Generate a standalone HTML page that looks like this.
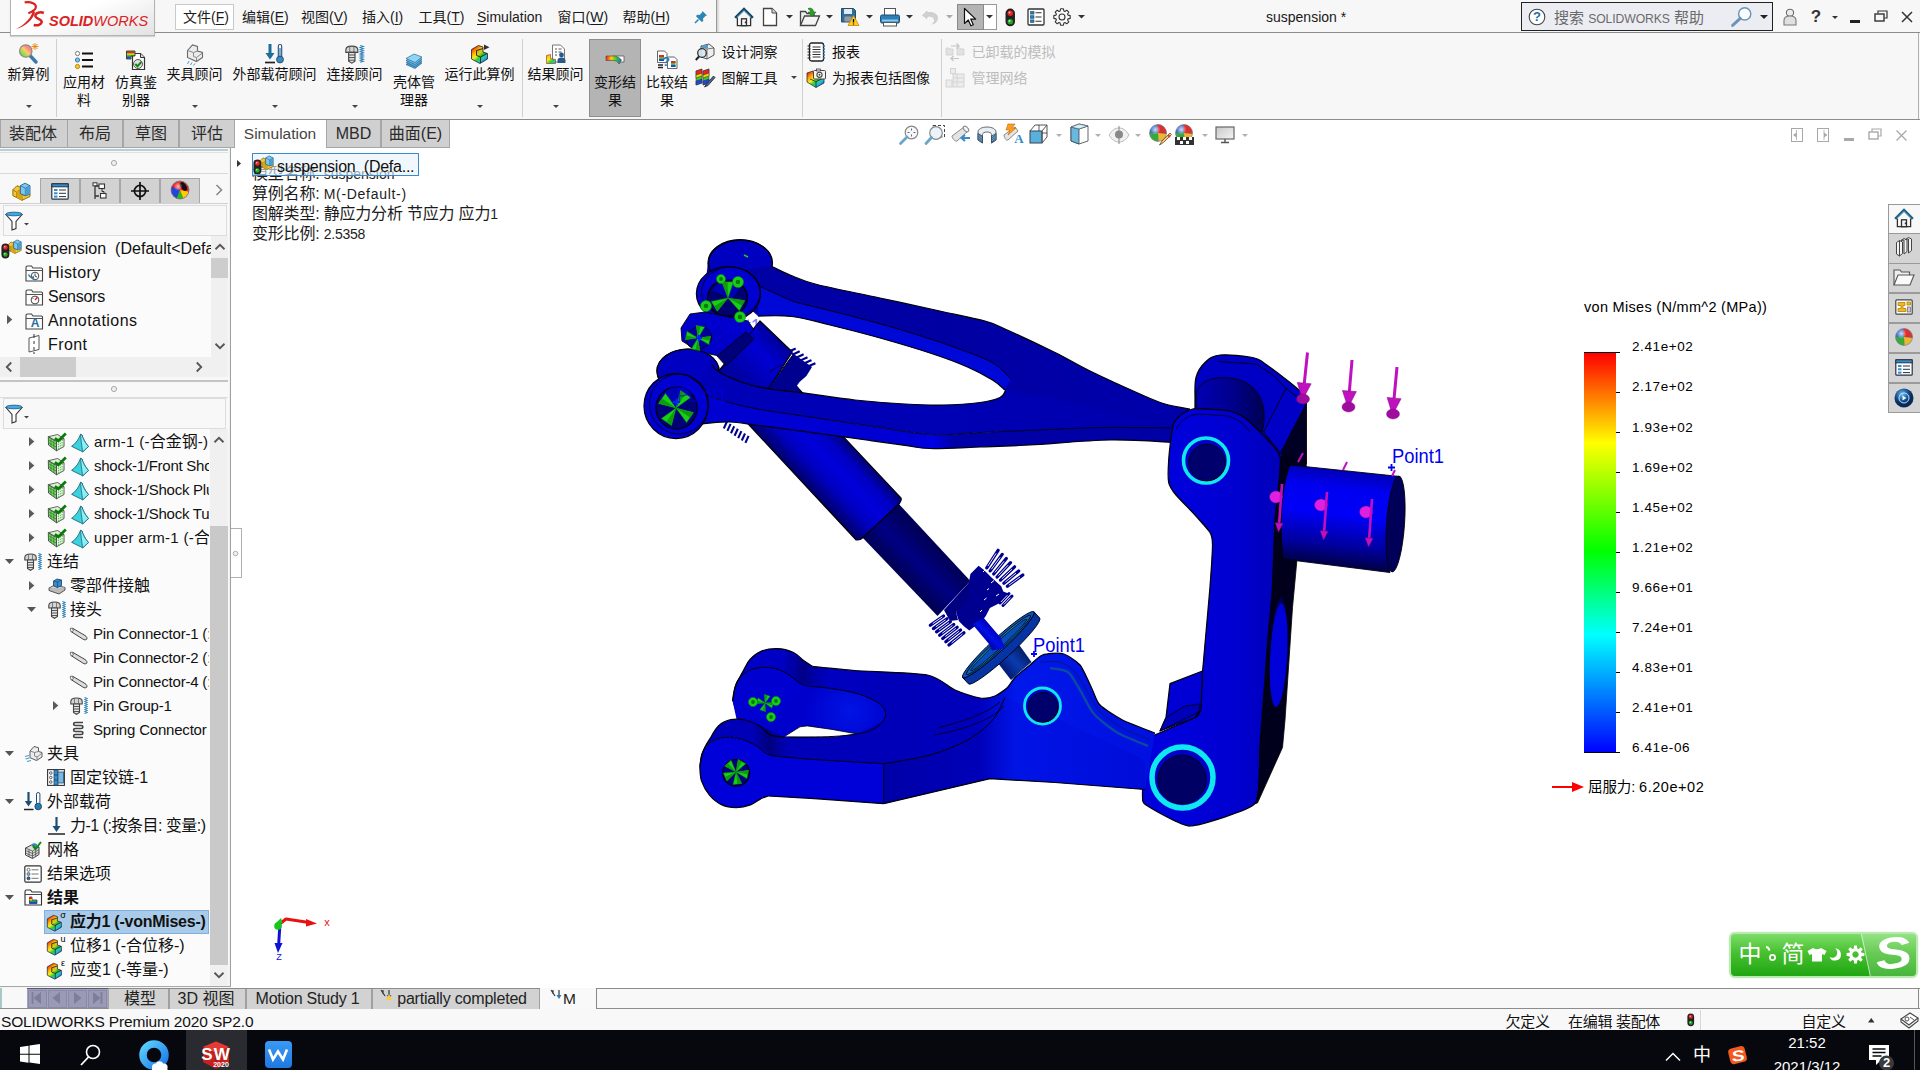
<!DOCTYPE html>
<html><head><meta charset="utf-8"><title>SOLIDWORKS Premium 2020 - suspension</title>
<style>
html,body{margin:0;padding:0;}
body{width:1920px;height:1070px;overflow:hidden;background:#fff;position:relative;font-family:"Liberation Sans","Noto Sans CJK SC",sans-serif;}
#app{position:absolute;left:0;top:0;width:1920px;height:1070px;overflow:hidden;background:#fff;}
#app div,#app svg,#app .t{position:absolute;}
.t{white-space:nowrap;}
svg{overflow:visible;}
u{text-decoration-thickness:1px;text-underline-offset:2px;}
</style></head><body><div id="app">
<!-- viewport model -->
<svg style="left:0;top:0" width="1920" height="1070" viewBox="0 0 1920 1070"><defs>
<linearGradient id="gTube" gradientUnits="userSpaceOnUse" x1="800" y1="479.7" x2="844.3" y2="438.1"><stop offset="0" stop-color="#000068"/><stop offset=".3" stop-color="#0000c0"/><stop offset=".55" stop-color="#0000da"/><stop offset=".8" stop-color="#0000c4"/><stop offset="1" stop-color="#000074"/></linearGradient><linearGradient id="gTubeU" gradientUnits="userSpaceOnUse" x1="735" y1="375" x2="785" y2="328"><stop offset="0" stop-color="#0000a0"/><stop offset=".5" stop-color="#0000d4"/><stop offset="1" stop-color="#000078"/></linearGradient>
<linearGradient id="gRod" gradientUnits="userSpaceOnUse" x1="880" y1="560" x2="915" y2="525"><stop offset="0" stop-color="#00004c"/><stop offset=".5" stop-color="#000084"/><stop offset="1" stop-color="#000056"/></linearGradient>
<linearGradient id="gFront" gradientUnits="userSpaceOnUse" x1="700" y1="0" x2="1180" y2="0"><stop offset="0" stop-color="#0000d0"/><stop offset=".44" stop-color="#0000d4"/><stop offset=".485" stop-color="#0000e4"/><stop offset=".53" stop-color="#0000a8"/><stop offset="1" stop-color="#0000a4"/></linearGradient>
<linearGradient id="gTop" gradientUnits="userSpaceOnUse" x1="700" y1="0" x2="1200" y2="0"><stop offset="0" stop-color="#0000a6"/><stop offset=".5" stop-color="#0000a2"/><stop offset="1" stop-color="#0000ac"/></linearGradient><linearGradient id="gTopN" gradientUnits="userSpaceOnUse" x1="700" y1="0" x2="1200" y2="0"><stop offset="0" stop-color="#0000b8"/><stop offset=".5" stop-color="#0000b4"/><stop offset="1" stop-color="#0000ac"/></linearGradient>
<linearGradient id="gSp" gradientUnits="userSpaceOnUse" x1="1342" y1="468" x2="1330" y2="570"><stop offset="0" stop-color="#0000b0"/><stop offset=".2" stop-color="#0000f0"/><stop offset=".45" stop-color="#0000f8"/><stop offset=".75" stop-color="#0000a0"/><stop offset="1" stop-color="#000030"/></linearGradient>
<linearGradient id="gKn" gradientUnits="userSpaceOnUse" x1="1170" y1="0" x2="1280" y2="0"><stop offset="0" stop-color="#0000dc"/><stop offset=".6" stop-color="#0000d0"/><stop offset="1" stop-color="#0000b8"/></linearGradient>
<linearGradient id="gLow" gradientUnits="userSpaceOnUse" x1="700" y1="0" x2="1150" y2="0"><stop offset="0" stop-color="#0000cc"/><stop offset=".3" stop-color="#0000c0"/><stop offset=".41" stop-color="#0000b8"/><stop offset=".62" stop-color="#0000bc"/><stop offset=".7" stop-color="#0018ea"/><stop offset="1" stop-color="#0010e0"/></linearGradient>
<linearGradient id="gLowF" gradientUnits="userSpaceOnUse" x1="700" y1="0" x2="1150" y2="0"><stop offset="0" stop-color="#0000d8"/><stop offset=".4" stop-color="#0000d0"/><stop offset=".41" stop-color="#0000a8"/><stop offset=".62" stop-color="#0000b8"/><stop offset=".7" stop-color="#0014e6"/><stop offset="1" stop-color="#000cd8"/></linearGradient>
<radialGradient id="gHole"><stop offset="0" stop-color="#0000c8"/><stop offset="1" stop-color="#000050"/></radialGradient>
<linearGradient id="gBush" gradientUnits="userSpaceOnUse" x1="1200" y1="0" x2="1265" y2="0"><stop offset="0" stop-color="#0000b0"/><stop offset=".5" stop-color="#00008c"/><stop offset="1" stop-color="#000050"/></linearGradient>
</defs><ellipse cx="740" cy="263" rx="32" ry="23.5" fill="#0000c0" stroke="#000008" stroke-width="1.25" />
<path d="M708 263 a32 23 0 0 1 64 0 l-8 22 l-60 8 z" fill="#0000c0" />
<ellipse cx="740.5" cy="263" rx="32" ry="23" fill="none" stroke="#000008" stroke-width="1.25" />
<path d="M771.0 266.0C774.2 267.5 782.3 271.9 790.0 275.0C797.7 278.1 802.0 280.7 817.0 284.5C832.0 288.3 859.2 293.5 880.0 298.0C900.8 302.5 924.5 307.7 942.0 311.5C959.5 315.3 974.5 318.1 985.0 321.0C995.5 323.9 993.3 323.8 1005.0 329.0C1016.7 334.2 1040.8 345.5 1055.0 352.5C1069.2 359.5 1075.8 364.1 1090.0 371.0C1104.2 377.9 1127.5 388.5 1140.0 394.0C1152.5 399.5 1156.7 401.5 1165.0 404.0C1173.3 406.5 1185.8 408.2 1190.0 409.0 L1190.0 409.0 L1180.0 442.0 L1180.0 442.0C1173.3 441.6 1153.0 439.8 1140.0 439.5C1127.0 439.2 1118.7 439.2 1102.0 440.0C1085.3 440.8 1057.0 443.0 1040.0 444.0C1023.0 445.0 1006.7 445.7 1000.0 446.0 L1000.0 446.0 L1002.0 400.0 L1005.0 390.0 L1005.0 390.0C1002.9 388.3 998.8 383.8 992.5 380.0C986.2 376.2 977.9 371.5 967.5 367.0C957.1 362.5 944.6 357.8 930.0 353.0C915.4 348.2 896.7 342.7 880.0 338.0C863.3 333.3 844.7 328.6 830.0 325.0C815.3 321.4 804.0 318.0 792.0 316.5C780.0 315.0 763.7 316.1 758.0 316.0 L758.0 316.0 L740.0 300.0 L745.0 270.0Z" fill="url(#gTop)" />
<path d="M758.0 285.5C763.3 287.9 782.2 296.8 790.0 300.0C797.8 303.2 794.2 301.7 805.0 304.5C815.8 307.3 838.3 312.6 855.0 317.0C871.7 321.4 888.3 325.9 905.0 331.0C921.7 336.1 940.5 342.2 955.0 347.5C969.5 352.8 982.7 357.2 992.0 362.5C1001.3 367.8 1007.8 376.2 1011.0 379.0 L1011.0 379.0 L1005.0 390.0 L1005.0 390.0C1002.9 388.3 998.8 383.8 992.5 380.0C986.2 376.2 977.9 371.5 967.5 367.0C957.1 362.5 944.6 357.8 930.0 353.0C915.4 348.2 896.7 342.7 880.0 338.0C863.3 333.3 844.7 328.6 830.0 325.0C815.3 321.4 804.0 318.0 792.0 316.5C780.0 315.0 763.7 316.1 758.0 316.0 L758.0 316.0 L758.0 292.0Z" fill="#0008d8" />
<path d="M771.0 266.0C774.2 267.5 782.3 271.9 790.0 275.0C797.7 278.1 802.0 280.7 817.0 284.5C832.0 288.3 859.2 293.5 880.0 298.0C900.8 302.5 924.5 307.7 942.0 311.5C959.5 315.3 974.5 318.1 985.0 321.0C995.5 323.9 993.3 323.8 1005.0 329.0C1016.7 334.2 1040.8 345.5 1055.0 352.5C1069.2 359.5 1075.8 364.1 1090.0 371.0C1104.2 377.9 1127.5 388.5 1140.0 394.0C1152.5 399.5 1156.7 401.5 1165.0 404.0C1173.3 406.5 1185.8 408.2 1190.0 409.0" fill="none" stroke="#000008" stroke-width="1.25" stroke-linejoin="round" />
<path d="M758.0 285.5C763.3 287.9 782.2 296.8 790.0 300.0C797.8 303.2 794.2 301.7 805.0 304.5C815.8 307.3 838.3 312.6 855.0 317.0C871.7 321.4 888.3 325.9 905.0 331.0C921.7 336.1 940.5 342.2 955.0 347.5C969.5 352.8 982.7 357.2 992.0 362.5C1001.3 367.8 1007.8 376.2 1011.0 379.0" fill="none" stroke="#000008" stroke-width="0.9" stroke-linejoin="round" />
<path d="M1005.0 390.0C1002.9 388.3 998.8 383.8 992.5 380.0C986.2 376.2 977.9 371.5 967.5 367.0C957.1 362.5 944.6 357.8 930.0 353.0C915.4 348.2 896.7 342.7 880.0 338.0C863.3 333.3 844.7 328.6 830.0 325.0C815.3 321.4 804.0 318.0 792.0 316.5C780.0 315.0 763.7 316.1 758.0 316.0" fill="none" stroke="#000008" stroke-width="1.25" stroke-linejoin="round" />
<ellipse cx="728.4" cy="293.7" rx="32" ry="27" fill="#0000d0" stroke="#000008" stroke-width="1.25" />
<ellipse cx="731" cy="292" rx="29.5" ry="25" fill="none" stroke="#000008" stroke-width="0.8" />
<ellipse cx="727.5" cy="298" rx="20" ry="18" fill="#000070" stroke="#000008" stroke-width="1.25" />
<path d="M712 290 a20 18 0 0 1 30 -5 l-10 14z" fill="#0000b4" />
<path d="M897.0 502.0 L970.4 581.0 L937.5 616.0 L861.5 536.5Z" fill="url(#gRod)" />
<path d="M797 387 L842.600 435.900 L900.900 497.900 Q902 500 899.400 503.500 L863 537.500 Q860 540.500 856 539.800 L753.600 429.900 L714.600 388Z" fill="url(#gTube)" stroke="#000008" stroke-width="1.25" stroke-linejoin="round" />
<path d="M760 321 L792.300 352 L769 388 L712 388 L717.500 372.500Z" fill="url(#gTubeU)" stroke="#000008" stroke-width="1.25" stroke-linejoin="round" />
<path d="M690 314 L705 312 L748 321 L754 330 L724 357 L700 352 L682 341 L681 328Z" fill="#0000c8" stroke="#000008" stroke-width="0.9" stroke-linejoin="round" />
<path d="M717 356 L746 332 L754 339 L726 366Z" fill="#000078" stroke="#000008" stroke-width="0.8" stroke-linejoin="round" />
<defs><linearGradient id="gThin" gradientUnits="userSpaceOnUse" x1="976" y1="634" x2="988" y2="622"><stop offset="0" stop-color="#0000a8"/><stop offset=".5" stop-color="#0010e8"/><stop offset="1" stop-color="#0000b8"/></linearGradient><linearGradient id="gStub" gradientUnits="userSpaceOnUse" x1="1006" y1="672" x2="1026" y2="654"><stop offset="0" stop-color="#041c78"/><stop offset=".5" stop-color="#0a3cb0"/><stop offset="1" stop-color="#04206c"/></linearGradient><linearGradient id="gDisc" gradientUnits="userSpaceOnUse" x1="950" y1="0" x2="1047" y2="0"><stop offset="0" stop-color="#0a4cb8"/><stop offset=".3" stop-color="#18a098"/><stop offset=".5" stop-color="#0a50c0"/><stop offset=".7" stop-color="#18a098"/><stop offset="1" stop-color="#0a4cb8"/></linearGradient></defs>
<path d="M994 658 L1015 639 L1031.500 662 L1011 680Z" fill="url(#gStub)" />
<path d="M970.4 574.0 L978.6 565.7 L983.7 569.8 L992.0 578.0 L1001.2 586.3 L1003.3 591.4 L1008.4 593.5 L1002.2 601.7 L989.9 607.9 L985.8 616.0 L981.7 621.2 L969.3 630.5 L964.2 626.4 L959.0 621.2 L956.0 612.0 L965.0 600.0 L968.3 586.3Z" fill="#000090" />
<path d="M944 610 L970.400 581 L968 600 L956 612 L958 620 L950 621Z" fill="#000080" />
<path d="M983 572l2-2M991 583l3-2.500M996 596l3-2M984 600l2.500-2M980 612l2-2M987 590l2-1.500" fill="none" stroke="#fff" stroke-width="1" stroke-linejoin="round" />
<path d="M986.8 567.8L998.1 550.3M990.2 570.9L1002.2 554.4M993.7 574.0L1006.3 558.5M997.1 577.0L1010.5 562.7M1000.5 580.1L1014.6 566.8M1003.9 583.2L1018.7 570.9M1007.4 586.3L1022.8 575.0" fill="none" stroke="#000090" stroke-width="3.2" stroke-linejoin="round" stroke-linecap="round"/>
<path d="M987.9 566.0L996.1 553.4M991.4 569.2L1000.1 557.4M994.9 572.4L1004.1 561.3M998.4 575.6L1008.1 565.2M1001.9 578.8L1012.0 569.2M1005.4 582.0L1016.0 573.1M1008.9 585.2L1020.0 577.0" fill="none" stroke="#fff" stroke-width="0.9" stroke-linejoin="round" />
<path d="M1000.0 603.0L1009.0 593.5M1003.0 605.5L1012.0 596.0" fill="none" stroke="#000090" stroke-width="3" stroke-linejoin="round" stroke-linecap="round"/>
<path d="M1000.9 602.0L1007.4 595.2M1003.9 604.5L1010.4 597.7" fill="none" stroke="#fff" stroke-width="0.9" stroke-linejoin="round" />
<path d="M943.6 616.0L930.3 625.3M947.0 618.8L933.4 628.6M950.4 621.6L936.5 631.9M953.8 624.4L939.6 635.2M957.2 627.2L942.7 638.5M960.6 630.0L945.8 641.8M964.0 632.8L948.9 645.1" fill="none" stroke="#000090" stroke-width="3.2" stroke-linejoin="round" stroke-linecap="round"/>
<path d="M942.3 616.9L932.7 623.6M945.6 619.8L935.8 626.8M949.0 622.6L939.0 630.0M952.4 625.5L942.2 633.3M955.8 628.3L945.3 636.5M959.1 631.2L948.5 639.7M962.5 634.0L951.6 642.9" fill="none" stroke="#fff" stroke-width="0.9" stroke-linejoin="round" />
<path d="M792.300 355.500 L789.500 351 L812 367 L806.400 376 L799.800 381.700 L797 385.400 L800.700 392 L769 388Z" fill="#00008e" />
<path d="M792.300 355.500 L769 387.500" fill="none" stroke="#000008" stroke-width="1" stroke-linejoin="round" />
<path d="M769 372 l12 -7" fill="none" stroke="#000078" stroke-width="1.5" stroke-linejoin="round" />
<path d="M790.5 350.8l4.2 -1.9M793.9 354.0l4.8 -2.2M797.2 357.2l5.4 -2.4M800.5 360.4l6.0 -2.7M803.9 363.6l6.6 -3.0M807.2 366.8l7.2 -3.2" fill="none" stroke="#000090" stroke-width="2.2" stroke-linejoin="round" stroke-linecap="square"/>
<path d="M727.0 421.5l-3.200 7M730.6 423.9l-3.200 7M734.2 426.3l-3.200 7M737.8 428.7l-3.200 7M741.4 431.1l-3.200 7M745.0 433.5l-3.200 7M748.6 435.9l-3.200 7" fill="none" stroke="#000090" stroke-width="2.1" stroke-linejoin="round" />
<g transform="rotate(-42.700 998.300 644.700)">
<path d="M949.800 644.700 a48.500 6.500 0 0 0 97 0 v8.500 a48.500 6.500 0 0 1 -97 0z" fill="#0634a4" stroke="#000008" stroke-width="0.9" stroke-linejoin="round" />
<ellipse cx="998.3" cy="644.7" rx="48.5" ry="6.5" fill="#0a54c0" stroke="#000008" stroke-width="0.9" />
<ellipse cx="998.3" cy="645" rx="43.5" ry="4.7" fill="url(#gDisc)" stroke="#000008" stroke-width="0.8" />
<ellipse cx="998.3" cy="645.2" rx="38" ry="3.2" fill="#0a4cbc" stroke="#000008" stroke-width="0.7" />
</g>
<path d="M972.400 624.300 L983.600 617.800 L1000.500 637.400 L1005 648 L992 650.500 L989 644Z" fill="url(#gThin)" />
<ellipse cx="699" cy="338" rx="13" ry="11" fill="#0000a0" stroke="#000008" stroke-width="0.8" transform="rotate(-20 699 338)" />
<ellipse cx="688" cy="371" rx="31" ry="22" fill="#0000c0" stroke="#000008" stroke-width="1.25" />
<path d="M657 371 a31 22 0 0 1 62 0 l-4 25 l-54 4 z" fill="#0000c0" />
<ellipse cx="688" cy="371" rx="31" ry="22" fill="none" stroke="#000008" stroke-width="1.25" />
<path d="M712.0 364.0C712.9 365.2 712.4 367.9 717.5 371.0C722.6 374.1 734.2 379.6 742.5 382.5C750.8 385.4 757.1 386.9 767.5 388.7C777.9 390.5 790.4 391.3 805.0 393.2C819.6 395.1 838.3 398.2 855.0 400.0C871.7 401.8 890.5 403.2 905.0 404.0C919.5 404.8 929.5 405.2 942.0 405.0C954.5 404.8 970.3 403.8 980.0 402.5C989.7 401.2 995.7 399.6 1000.0 397.5C1004.3 395.4 1005.0 391.2 1006.0 390.0 L1006.0 390.0 L1060.0 400.0 L1176.0 428.0 L1176.0 428.0C1163.7 427.9 1124.7 427.2 1102.0 427.5C1079.3 427.8 1060.3 429.2 1040.0 430.0C1019.7 430.8 995.0 431.8 980.0 432.5C965.0 433.2 960.0 434.3 950.0 434.5C940.0 434.7 933.3 434.9 920.0 433.5C906.7 432.1 885.0 428.2 870.0 426.0C855.0 423.8 841.7 421.8 830.0 420.0C818.3 418.2 812.5 417.4 800.0 415.5C787.5 413.6 767.1 410.8 755.0 408.5C742.9 406.2 735.5 404.2 727.5 402.0C719.5 399.8 710.4 396.6 707.0 395.5 L707.0 395.5 L700.0 380.0Z" fill="url(#gTopN)" />
<path d="M707.0 395.5C710.4 396.6 719.5 399.8 727.5 402.0C735.5 404.2 742.9 406.2 755.0 408.5C767.1 410.8 787.5 413.6 800.0 415.5C812.5 417.4 818.3 418.2 830.0 420.0C841.7 421.8 855.0 423.8 870.0 426.0C885.0 428.2 906.7 432.1 920.0 433.5C933.3 434.9 940.0 434.7 950.0 434.5C960.0 434.3 965.0 433.2 980.0 432.5C995.0 431.8 1019.7 430.8 1040.0 430.0C1060.3 429.2 1079.3 427.8 1102.0 427.5C1124.7 427.2 1163.7 427.9 1176.0 428.0 L1176.0 428.0 L1176.0 442.5 L1176.0 442.5C1165.0 442.1 1134.3 439.6 1110.0 440.0C1085.7 440.4 1051.7 443.8 1030.0 445.0C1008.3 446.2 996.7 446.4 980.0 447.0C963.3 447.6 942.5 448.8 930.0 448.5C917.5 448.2 915.0 446.7 905.0 445.4C895.0 444.1 882.5 442.2 870.0 440.5C857.5 438.8 842.9 436.8 830.0 435.0C817.1 433.2 805.0 431.7 792.5 430.0C780.0 428.3 765.4 426.3 755.0 425.0C744.6 423.7 739.2 422.2 730.0 422.0C720.8 421.8 705.0 423.7 700.0 424.0 L700.0 424.0 L707.0 395.5Z" fill="url(#gFront)" />
<path d="M712.0 364.0C712.9 365.2 712.4 367.9 717.5 371.0C722.6 374.1 734.2 379.6 742.5 382.5C750.8 385.4 757.1 386.9 767.5 388.7C777.9 390.5 790.4 391.3 805.0 393.2C819.6 395.1 838.3 398.2 855.0 400.0C871.7 401.8 890.5 403.2 905.0 404.0C919.5 404.8 929.5 405.2 942.0 405.0C954.5 404.8 970.3 403.8 980.0 402.5C989.7 401.2 995.7 399.6 1000.0 397.5C1004.3 395.4 1005.0 391.2 1006.0 390.0" fill="none" stroke="#000008" stroke-width="1.25" stroke-linejoin="round" />
<path d="M707.0 395.5C710.4 396.6 719.5 399.8 727.5 402.0C735.5 404.2 742.9 406.2 755.0 408.5C767.1 410.8 787.5 413.6 800.0 415.5C812.5 417.4 818.3 418.2 830.0 420.0C841.7 421.8 855.0 423.8 870.0 426.0C885.0 428.2 906.7 432.1 920.0 433.5C933.3 434.9 940.0 434.7 950.0 434.5C960.0 434.3 965.0 433.2 980.0 432.5C995.0 431.8 1019.7 430.8 1040.0 430.0C1060.3 429.2 1079.3 427.8 1102.0 427.5C1124.7 427.2 1163.7 427.9 1176.0 428.0" fill="none" stroke="#000008" stroke-width="0.9" stroke-linejoin="round" />
<path d="M700.0 424.0C705.0 423.7 720.8 421.8 730.0 422.0C739.2 422.2 744.6 423.7 755.0 425.0C765.4 426.3 780.0 428.3 792.5 430.0C805.0 431.7 817.1 433.2 830.0 435.0C842.9 436.8 857.5 438.8 870.0 440.5C882.5 442.2 895.0 444.1 905.0 445.4C915.0 446.7 917.5 448.2 930.0 448.5C942.5 448.8 963.3 447.6 980.0 447.0C996.7 446.4 1008.3 446.2 1030.0 445.0C1051.7 443.8 1085.7 440.4 1110.0 440.0C1134.3 439.6 1165.0 442.1 1176.0 442.5" fill="none" stroke="#000008" stroke-width="1.25" stroke-linejoin="round" />
<ellipse cx="676" cy="406" rx="32" ry="32.5" fill="#0000d0" stroke="#000008" stroke-width="1.25" />
<ellipse cx="679" cy="404" rx="29.5" ry="30" fill="none" stroke="#000008" stroke-width="0.8" />
<ellipse cx="676.5" cy="408" rx="20.5" ry="21" fill="#000078" stroke="#000008" stroke-width="1.25" />
<path d="M660 398 a20 21 0 0 1 30 -6 l-12 16z" fill="#0000b4" />
<path d="M1195.0 400.0C1195.2 396.2 1194.3 383.8 1196.0 377.5C1197.7 371.2 1201.0 366.2 1205.0 362.5C1209.0 358.8 1212.1 355.8 1220.0 355.0C1227.9 354.2 1245.0 356.1 1252.5 357.5C1260.0 358.9 1258.8 359.5 1265.0 363.7C1271.2 367.9 1283.2 377.1 1290.0 382.5C1296.8 387.9 1303.3 393.8 1306.0 396.0L1306 470 L1280 470 L1240 430 L1195 420Z" fill="#0000c4" stroke="#000008" stroke-width="1.25" stroke-linejoin="round" />
<path d="M1263.500 432 L1286 388.500 L1306.400 403.700 L1280.600 453Z" fill="#0000c6" stroke="#000008" stroke-width="0.9" stroke-linejoin="round" />
<path d="M1218 361.500 L1256 364 L1273.500 375.400 L1286 388.500" fill="none" stroke="#000008" stroke-width="0.9" stroke-linejoin="round" />
<path d="M1306.400 403.700 L1306.400 464 L1291 465 L1280.600 453Z" fill="#000024" stroke="#000008" stroke-width="0.8" stroke-linejoin="round" />
<path d="M1196 395 C1200 375 1225 376 1240 380 C1262 388 1268 410 1262 432 L1232 412 L1196 408Z" fill="url(#gBush)" stroke="#000008" stroke-width="0.9" stroke-linejoin="round" />
<path d="M1280.0 456.0 L1306.0 462.0 L1296.0 570.0 L1292.5 607.5 L1285.0 720.0 L1282.5 747.5 L1257.5 803.0 L1255.0 803.7 L1260.0 745.0 L1267.5 645.0 L1272.5 570.0 L1275.0 520.0Z" fill="#00001c" stroke="#000008" stroke-width="0.8" stroke-linejoin="round" />
<ellipse cx="1278.7" cy="655" rx="8.5" ry="52" fill="#0000d8" transform="rotate(3 1278.7 655)" />
<path d="M1271 640 a8.500 52 3 0 1 14 -30 l-2 -12 a8.500 52 3 0 0 -12 42z" fill="#000050" />
<path d="M1172.5 427.5C1173.0 424.2 1174.2 422.1 1175.0 421.0C1175.8 419.9 1180.8 414.7 1182.5 413.7C1184.2 412.7 1191.0 408.9 1195.0 408.7C1199.0 408.5 1225.6 410.1 1230.0 411.0C1234.4 411.9 1243.3 416.2 1247.5 420.0C1251.7 423.8 1277.7 447.7 1280.0 456.0C1282.3 464.3 1275.6 509.1 1275.0 520.0C1274.4 530.9 1273.1 576.6 1272.5 587.0C1271.9 597.4 1268.5 631.8 1267.5 645.0C1266.5 658.2 1261.0 731.8 1260.0 745.0C1259.0 758.2 1260.8 797.0 1255.0 803.7C1249.2 810.5 1199.1 825.9 1190.0 826.0C1180.9 826.1 1150.0 807.6 1146.0 805.0C1142.0 802.4 1142.6 800.0 1142.5 795.0C1142.4 790.0 1144.0 750.0 1145.0 745.0C1146.0 740.0 1150.8 737.3 1155.0 735.0C1159.2 732.7 1191.2 719.6 1195.0 717.5C1198.8 715.4 1199.4 713.8 1200.0 710.0C1200.6 706.2 1201.7 682.8 1202.5 672.5C1203.3 662.2 1209.2 597.6 1210.0 587.0C1210.8 576.4 1212.5 549.5 1212.5 545.0C1212.5 540.5 1211.5 535.0 1210.0 532.5C1208.5 530.0 1197.8 518.1 1195.0 515.0C1192.2 511.9 1178.2 497.7 1176.0 495.0C1173.8 492.3 1169.3 485.4 1168.7 482.5C1168.1 479.6 1168.4 464.6 1168.7 460.0C1169.0 455.4 1172.0 430.8 1172.5 427.5Z" fill="url(#gKn)" stroke="#000008" stroke-width="1.25" stroke-linejoin="round" />
<path d="M1176 430 C1180 420 1190 414 1200 414 L1228 416 C1238 419 1244 424 1250 432" fill="none" stroke="#000008" stroke-width="0.8" stroke-linejoin="round" />
<ellipse cx="1206" cy="460.5" rx="22.5" ry="22.5" fill="#0000c8" stroke="#10e8f0" stroke-width="3.6" />
<ellipse cx="1207" cy="462.5" rx="18.3" ry="18.3" fill="#00006c" stroke="#000008" stroke-width="0.8" />
<ellipse cx="1182.5" cy="777.5" rx="30.5" ry="30.5" fill="#0000c8" stroke="#10e8f0" stroke-width="5.5" />
<ellipse cx="1182" cy="779.5" rx="24.3" ry="24.3" fill="#000064" stroke="#000008" stroke-width="0.8" />
<path d="M1170 683.700 L1202.500 671 L1201 710 L1195 717.500 L1160 731 L1166 717.500Z" fill="#0000d4" stroke="#000008" stroke-width="1.25" stroke-linejoin="round" />
<path d="M1166 717.500 L1185 706 L1200 704 L1199 712 L1160 731Z" fill="#0000b8" stroke="#000008" stroke-width="0.8" stroke-linejoin="round" />
<path d="M1290 465 L1400 476.500 C1390 490 1384 540 1390 572.500 L1283 559 C1279 522 1282 485 1290 465Z" fill="url(#gSp)" stroke="#000008" stroke-width="0.9" stroke-linejoin="round" />
<ellipse cx="1395.5" cy="524" rx="9" ry="48" fill="#000058" stroke="#000008" stroke-width="0.9" transform="rotate(4 1395.5 524)" />
<path d="M732.6 701.0C733.0 698.6 733.5 691.8 735.3 686.8C737.1 681.8 740.8 675.3 743.3 670.8C745.8 666.2 747.0 662.8 750.0 659.5C753.0 656.2 756.5 653.1 761.0 651.3C765.5 649.5 771.7 648.5 777.0 648.6C782.3 648.8 788.6 650.2 793.0 652.2C797.4 654.2 800.4 658.1 803.6 660.5C806.9 662.9 811.0 665.4 812.5 666.4 L812.5 666.4C817.5 666.9 841.6 669.5 855.0 670.5C868.4 671.5 915.8 672.7 927.5 675.0C939.2 677.3 948.9 687.3 955.0 690.0C961.1 692.7 975.3 697.3 980.0 698.0C984.7 698.7 991.8 697.2 995.0 696.0C998.2 694.8 1005.2 689.7 1007.5 687.5C1009.8 685.3 1012.4 680.1 1015.0 677.5C1017.6 674.9 1026.8 667.6 1030.0 665.0C1033.2 662.4 1038.7 656.3 1042.5 655.0C1046.3 653.7 1058.1 652.5 1062.5 653.7C1066.9 654.9 1076.5 660.8 1080.0 665.0C1083.5 669.2 1090.2 685.3 1092.5 690.0C1094.8 694.7 1096.5 701.5 1100.0 705.0C1103.5 708.5 1116.1 716.7 1122.5 720.0C1128.9 723.3 1151.2 731.5 1155.0 733.0 L1155.0 733.0 L1145.0 789.5 L1145.0 789.5 L1055.0 782.5 L990.0 778.7 L883.7 803.7 L814.3 798.6 L768.1 796.0 L768.1 796.0 L745.0 745.0 L732.6 701.0Z" fill="url(#gLow)" />
<defs><linearGradient id="gRoot" gradientUnits="userSpaceOnUse" x1="780" y1="0" x2="830" y2="0"><stop offset="0" stop-color="#000090" stop-opacity="0"/><stop offset=".45" stop-color="#00007c" stop-opacity=".85"/><stop offset="1" stop-color="#000090" stop-opacity="0"/></linearGradient><radialGradient id="gU" gradientUnits="userSpaceOnUse" cx="850" cy="712" r="45"><stop offset="0" stop-color="#0014e4"/><stop offset="1" stop-color="#0000cc"/></radialGradient><linearGradient id="gRoot2" gradientUnits="userSpaceOnUse" x1="748" y1="0" x2="790" y2="0"><stop offset="0" stop-color="#000090" stop-opacity="0"/><stop offset=".5" stop-color="#000070" stop-opacity=".85"/><stop offset="1" stop-color="#000090" stop-opacity="0"/></linearGradient></defs>
<path d="M786 650 L812.5 666.4 L840 669 L840 690 L800 683.3 L784 671.7Z" fill="url(#gRoot)" />
<path d="M732.6 701.0C733.3 697.8 734.3 686.5 737.0 681.5C739.7 676.5 743.7 673.2 748.6 670.8C753.5 668.4 760.4 667.1 766.3 667.3C772.2 667.4 778.4 669.0 784.0 671.7C789.6 674.4 796.1 680.9 800.0 683.3C803.9 685.7 806.0 685.5 807.2 686.0 L807.2 686.0C811.3 686.4 823.4 687.3 832.0 688.6C840.6 689.9 850.9 691.6 858.6 694.0C866.3 696.4 873.8 699.8 878.2 702.8C882.7 705.8 884.4 708.8 885.3 711.7C886.2 714.7 885.6 717.5 883.5 720.5C881.4 723.5 877.3 727.2 872.9 729.4C868.5 731.6 863.7 732.7 856.9 733.9C850.1 735.1 843.2 735.9 832.0 736.5C820.8 737.1 796.5 737.2 789.4 737.4 L789.4 737.4 L745.0 740.0 L732.6 701.0Z" fill="url(#gU)" />
<path d="M732.6 701.0 L737.0 681.5 L748.6 670.8 L766.3 667.3 L784.0 671.7 L800.0 683.3 L807.2 686.0 L740.0 735.0Z" fill="#0000d0" />
<path d="M784 736.8 L800 726.8 L807.2 725.9 L832 729.4 L857.5 734 L832 737.6Z" fill="#fff" stroke="#000008" stroke-width="0.8" stroke-linejoin="round" />
<path d="M699.8 766.7C700.4 764.0 701.4 755.7 703.3 750.7C705.2 745.7 708.8 740.6 711.3 736.5C713.8 732.4 715.1 728.7 718.4 725.9C721.6 723.1 726.1 720.6 730.8 719.7C735.5 718.8 741.8 719.3 746.8 720.5C751.8 721.7 757.1 724.4 761.0 726.8C764.9 729.2 766.1 733.0 769.9 734.7C773.7 736.4 781.6 736.6 784.0 737.0 L784.0 737.0 L832.0 737.6 L857.5 734.0 L883.5 721.0 L883.7 763.7 L883.7 763.7 L814.3 759.6 L773.4 756.0 L773.4 756.0C771.9 755.4 767.5 754.3 764.6 752.5C761.7 750.7 759.6 747.6 755.7 745.4C751.9 743.2 746.5 740.5 741.5 739.2C736.5 737.9 730.5 737.0 725.5 737.4C720.5 737.8 715.1 739.3 711.3 741.8C707.4 744.3 704.3 748.4 702.4 752.5C700.5 756.6 700.2 764.3 699.8 766.7Z" fill="#0000b8" />
<path d="M752 722 L784 737 L800 737.4 L800 758.5 L773.4 756 L755.7 745.4Z" fill="url(#gRoot2)" />
<path d="M699.8 766.7C700.2 764.3 700.5 756.6 702.4 752.5C704.3 748.4 707.4 744.3 711.3 741.8C715.1 739.3 720.5 737.8 725.5 737.4C730.5 737.0 736.5 737.9 741.5 739.2C746.5 740.5 751.9 743.2 755.7 745.4C759.6 747.6 761.7 750.7 764.6 752.5C767.5 754.3 771.9 755.4 773.4 756.0 L773.4 756.0 L814.3 759.6 L883.7 763.7 L883.7 803.7 L814.3 798.6 L768.1 796.0 L768.1 796.0C766.9 796.4 764.0 797.1 761.0 798.6C758.0 800.1 754.5 803.4 750.4 804.9C746.3 806.4 740.9 807.5 736.2 807.5C731.5 807.5 726.5 807.0 722.0 804.9C717.5 802.8 712.9 799.1 709.5 795.1C706.1 791.1 703.1 785.6 701.5 780.9C699.9 776.2 700.1 769.1 699.8 766.7Z" fill="#0000d8" />
<path d="M883.7 763.7C891.4 762.2 916.0 759.0 930.0 755.0C944.0 751.0 957.1 745.8 967.5 740.0C977.9 734.2 986.2 727.1 992.5 720.0C998.8 712.9 1002.9 701.2 1005.0 697.5 L1005.0 697.5 L1060.0 720.0 L1145.0 760.0 L1145.0 789.5 L1145.0 789.5 L1055.0 782.5 L990.0 778.7 L883.7 803.7Z" fill="url(#gLowF)" />
<path d="M732.6 701.0C733.0 698.6 733.5 691.8 735.3 686.8C737.1 681.8 740.8 675.3 743.3 670.8C745.8 666.2 747.0 662.8 750.0 659.5C753.0 656.2 756.5 653.1 761.0 651.3C765.5 649.5 771.7 648.5 777.0 648.6C782.3 648.8 788.6 650.2 793.0 652.2C797.4 654.2 800.4 658.1 803.6 660.5C806.9 662.9 811.0 665.4 812.5 666.4" fill="none" stroke="#000008" stroke-width="1.25" stroke-linejoin="round" />
<path d="M812.5 666.4C817.5 666.9 841.6 669.5 855.0 670.5C868.4 671.5 915.8 672.7 927.5 675.0C939.2 677.3 948.9 687.3 955.0 690.0C961.1 692.7 975.3 697.3 980.0 698.0C984.7 698.7 991.8 697.2 995.0 696.0C998.2 694.8 1005.2 689.7 1007.5 687.5C1009.8 685.3 1012.4 680.1 1015.0 677.5C1017.6 674.9 1026.8 667.6 1030.0 665.0C1033.2 662.4 1038.7 656.3 1042.5 655.0C1046.3 653.7 1058.1 652.5 1062.5 653.7C1066.9 654.9 1076.5 660.8 1080.0 665.0C1083.5 669.2 1090.2 685.3 1092.5 690.0C1094.8 694.7 1096.5 701.5 1100.0 705.0C1103.5 708.5 1116.1 716.7 1122.5 720.0C1128.9 723.3 1151.2 731.5 1155.0 733.0" fill="none" stroke="#000008" stroke-width="1.25" stroke-linejoin="round" />
<path d="M732.6 701.0C733.3 697.8 734.3 686.5 737.0 681.5C739.7 676.5 743.7 673.2 748.6 670.8C753.5 668.4 760.4 667.1 766.3 667.3C772.2 667.4 778.4 669.0 784.0 671.7C789.6 674.4 796.1 680.9 800.0 683.3C803.9 685.7 806.0 685.5 807.2 686.0" fill="none" stroke="#000008" stroke-width="1" stroke-linejoin="round" />
<path d="M807.2 686.0C811.3 686.4 823.4 687.3 832.0 688.6C840.6 689.9 850.9 691.6 858.6 694.0C866.3 696.4 873.8 699.8 878.2 702.8C882.7 705.8 884.4 708.8 885.3 711.7C886.2 714.7 885.6 717.5 883.5 720.5C881.4 723.5 877.3 727.2 872.9 729.4C868.5 731.6 863.7 732.7 856.9 733.9C850.1 735.1 843.2 735.9 832.0 736.5C820.8 737.1 796.5 737.2 789.4 737.4" fill="none" stroke="#000008" stroke-width="1" stroke-linejoin="round" />
<path d="M699.8 766.7C700.4 764.0 701.4 755.7 703.3 750.7C705.2 745.7 708.8 740.6 711.3 736.5C713.8 732.4 715.1 728.7 718.4 725.9C721.6 723.1 726.1 720.6 730.8 719.7C735.5 718.8 741.8 719.3 746.8 720.5C751.8 721.7 757.1 724.4 761.0 726.8C764.9 729.2 766.1 733.0 769.9 734.7C773.7 736.4 781.6 736.6 784.0 737.0" fill="none" stroke="#000008" stroke-width="1.25" stroke-linejoin="round" />
<path d="M699.8 766.7C700.2 764.3 700.5 756.6 702.4 752.5C704.3 748.4 707.4 744.3 711.3 741.8C715.1 739.3 720.5 737.8 725.5 737.4C730.5 737.0 736.5 737.9 741.5 739.2C746.5 740.5 751.9 743.2 755.7 745.4C759.6 747.6 761.7 750.7 764.6 752.5C767.5 754.3 771.9 755.4 773.4 756.0" fill="none" stroke="#000008" stroke-width="1" stroke-linejoin="round" />
<path d="M699.8 766.7C700.1 769.1 699.9 776.2 701.5 780.9C703.1 785.6 706.1 791.1 709.5 795.1C712.9 799.1 717.5 802.8 722.0 804.9C726.5 807.0 731.5 807.5 736.2 807.5C740.9 807.5 746.3 806.4 750.4 804.9C754.5 803.4 758.0 800.1 761.0 798.6C764.0 797.1 766.9 796.4 768.1 796.0" fill="none" stroke="#000008" stroke-width="1.25" stroke-linejoin="round" />
<path d="M773.4 756.0 L814.3 759.6 L883.7 763.7" fill="none" stroke="#000008" stroke-width="1" stroke-linejoin="round" />
<path d="M883.7 763.7C891.4 762.2 916.0 759.0 930.0 755.0C944.0 751.0 957.1 745.8 967.5 740.0C977.9 734.2 986.2 727.1 992.5 720.0C998.8 712.9 1002.9 701.2 1005.0 697.5" fill="none" stroke="#000008" stroke-width="1" stroke-linejoin="round" />
<path d="M768.1 796.0 L814.3 798.6 L883.7 803.7 L990.0 778.7 L1055.0 782.5 L1145.0 789.5" fill="none" stroke="#000008" stroke-width="1.25" stroke-linejoin="round" />
<path d="M883.700 763.700V803.700" fill="none" stroke="#000008" stroke-width="1" stroke-linejoin="round" />
<path d="M1040.0 662.0C1042.3 662.0 1055.9 660.8 1060.0 662.0C1064.1 663.2 1071.8 668.5 1075.0 672.0C1078.2 675.5 1084.6 687.3 1087.5 692.0C1090.4 696.7 1095.9 707.8 1100.0 712.0C1104.1 716.2 1116.7 724.7 1122.5 728.0C1128.3 731.3 1146.8 738.6 1150.0 740.0" fill="none" stroke="#001a7a" stroke-width="1" stroke-linejoin="round" />
<path d="M1050.0 668.0C1052.1 668.5 1064.5 669.4 1068.0 672.0C1071.5 674.6 1077.0 685.1 1080.0 690.0C1083.0 694.9 1089.6 709.0 1094.0 714.0C1098.4 719.0 1111.7 729.3 1118.0 733.0C1124.3 736.7 1144.5 744.5 1148.0 746.0" fill="none" stroke="#0a4aa0" stroke-width="2.5" stroke-linejoin="round" />
<path d="M1045 585 m0 0" fill="none" />
<ellipse cx="1042.5" cy="706" rx="18" ry="18" fill="#0000c8" stroke="#10e8f0" stroke-width="2.8" />
<ellipse cx="1043" cy="707.3" rx="15" ry="15" fill="#00006c" stroke="#000008" stroke-width="0.8" />
<path d="M938 728 C960 722 985 715 1000 702 M935 735 C960 730 990 722 1004 706" fill="none" stroke="#000008" stroke-width="0.8" stroke-linejoin="round" />
<ellipse cx="736.2" cy="773" rx="13.3" ry="13.3" fill="#000080" stroke="#000008" stroke-width="1.25" />
<path d="M728.0 298.0L739.3 310.7L744.8 300.6ZM728.0 298.0L711.3 301.4L717.3 311.2ZM728.0 298.0L733.4 281.9L721.9 282.1Z" fill="#18d018" stroke="#0a900a" stroke-width="0.5" stroke-linejoin="round" />
<path d="M728.0 298.0L742.0 305.7L744.8 300.6ZM728.0 298.0L714.3 306.3L717.3 311.2ZM728.0 298.0L727.6 282.0L721.9 282.1Z" fill="#0c9c0c" />
<ellipse cx="721" cy="279" rx="4.5" ry="4.5" fill="#18d018" stroke="#0a900a" stroke-width="0.6" />
<ellipse cx="721" cy="279" rx="1.89" ry="1.89" fill="#0a7a0a" />
<ellipse cx="738" cy="282" rx="5.5" ry="5.5" fill="#18d018" stroke="#0a900a" stroke-width="0.6" />
<ellipse cx="738" cy="282" rx="2.31" ry="2.31" fill="#0a7a0a" />
<ellipse cx="706" cy="306" rx="5.5" ry="5.5" fill="#18d018" stroke="#0a900a" stroke-width="0.6" />
<ellipse cx="706" cy="306" rx="2.31" ry="2.31" fill="#0a7a0a" />
<ellipse cx="740" cy="317" rx="5.5" ry="5.5" fill="#18d018" stroke="#0a900a" stroke-width="0.6" />
<ellipse cx="740" cy="317" rx="2.31" ry="2.31" fill="#0a7a0a" />
<path d="M698.0 338.0L708.9 344.6L710.6 336.2ZM698.0 338.0L691.4 348.9L699.8 350.6ZM698.0 338.0L687.1 331.4L685.4 339.8ZM698.0 338.0L704.6 327.1L696.2 325.4Z" fill="#18d018" stroke="#0a900a" stroke-width="0.5" stroke-linejoin="round" />
<path d="M698.0 338.0L709.8 340.4L710.6 336.2ZM698.0 338.0L695.6 349.8L699.8 350.6ZM698.0 338.0L686.2 335.6L685.4 339.8ZM698.0 338.0L700.4 326.2L696.2 325.4Z" fill="#0c9c0c" />
<path d="M676.0 408.0L686.6 422.6L693.5 412.5ZM676.0 408.0L661.4 418.6L671.5 425.5ZM676.0 408.0L665.4 393.4L658.5 403.5ZM676.0 408.0L690.6 397.4L680.5 390.5Z" fill="#18d018" stroke="#0a900a" stroke-width="0.5" stroke-linejoin="round" />
<path d="M676.0 408.0L690.0 417.6L693.5 412.5ZM676.0 408.0L666.4 422.0L671.5 425.5ZM676.0 408.0L662.0 398.4L658.5 403.5ZM676.0 408.0L685.6 394.0L680.5 390.5Z" fill="#0c9c0c" />
<path d="M744 255l4 2" fill="none" stroke="#18d018" stroke-width="1.5" stroke-linejoin="round" />
<path d="M673 402h7M676.500 398.500v7M696 338h6M699 335v6" fill="none" stroke="#0020ff" stroke-width="2" stroke-linejoin="round" />
<path d="M765.0 703.0L771.8 708.1L773.5 702.6ZM765.0 703.0L759.9 709.8L765.4 711.5ZM765.0 703.0L758.2 697.9L756.5 703.4ZM765.0 703.0L770.1 696.2L764.6 694.5Z" fill="#18d018" stroke="#0a900a" stroke-width="0.5" stroke-linejoin="round" />
<path d="M765.0 703.0L772.6 705.4L773.5 702.6ZM765.0 703.0L762.6 710.6L765.4 711.5ZM765.0 703.0L757.4 700.6L756.5 703.4ZM765.0 703.0L767.4 695.4L764.6 694.5Z" fill="#0c9c0c" />
<ellipse cx="753" cy="702" rx="4.5" ry="4.5" fill="#18d018" stroke="#0a900a" stroke-width="0.6" />
<ellipse cx="753" cy="702" rx="1.89" ry="1.89" fill="#0a7a0a" />
<ellipse cx="776" cy="701" rx="4.5" ry="4.5" fill="#18d018" stroke="#0a900a" stroke-width="0.6" />
<ellipse cx="776" cy="701" rx="1.89" ry="1.89" fill="#0a7a0a" />
<ellipse cx="771" cy="717" rx="4.5" ry="4.5" fill="#18d018" stroke="#0a900a" stroke-width="0.6" />
<ellipse cx="771" cy="717" rx="1.89" ry="1.89" fill="#0a7a0a" />
<path d="M736.0 772.0L746.9 778.6L748.6 770.2ZM736.0 772.0L733.1 784.4L741.7 783.4ZM736.0 772.0L723.3 773.1L726.9 780.9ZM736.0 772.0L731.1 760.2L724.7 766.1ZM736.0 772.0L745.7 763.7L738.1 759.4Z" fill="#18d018" stroke="#0a900a" stroke-width="0.5" stroke-linejoin="round" />
<path d="M736.0 772.0L747.8 774.4L748.6 770.2ZM736.0 772.0L737.4 783.9L741.7 783.4ZM736.0 772.0L725.1 777.0L726.9 780.9ZM736.0 772.0L727.9 763.2L724.7 766.1ZM736.0 772.0L741.9 761.6L738.1 759.4Z" fill="#0c9c0c" />
<path d="M1307.5 352.5L1304.3 383.1" fill="none" stroke="#c010c0" stroke-width="3" stroke-linejoin="round" />
<path d="M1302.5 400.0L1297.3 382.4L1311.2 383.8Z" fill="#c010c0" stroke="#80087c" stroke-width="0.5" stroke-linejoin="round" />
<ellipse cx="1303.0" cy="399" rx="6.5" ry="5" fill="#a00ca0" stroke="#80087c" stroke-width="0.4" />
<path d="M1352.0 360.0L1349.4 391.1" fill="none" stroke="#c010c0" stroke-width="3" stroke-linejoin="round" />
<path d="M1348.0 408.0L1342.4 390.5L1356.4 391.6Z" fill="#c010c0" stroke="#80087c" stroke-width="0.5" stroke-linejoin="round" />
<ellipse cx="1348.5" cy="407" rx="6.5" ry="5" fill="#a00ca0" stroke="#80087c" stroke-width="0.4" />
<path d="M1397.0 367.0L1394.1 398.1" fill="none" stroke="#c010c0" stroke-width="3" stroke-linejoin="round" />
<path d="M1392.5 415.0L1387.1 397.4L1401.1 398.7Z" fill="#c010c0" stroke="#80087c" stroke-width="0.5" stroke-linejoin="round" />
<ellipse cx="1393.0" cy="414" rx="6.5" ry="5" fill="#a00ca0" stroke="#80087c" stroke-width="0.4" />
<ellipse cx="1276" cy="497" rx="6.5" ry="6" fill="#e020e0" stroke="#80087c" stroke-width="0.4" />
<path d="M1282.0 484.0L1279.2 523.0" fill="none" stroke="#c010c0" stroke-width="2.6" stroke-linejoin="round" />
<path d="M1278.5 532.0L1275.2 522.7L1283.1 523.3Z" fill="#c010c0" stroke="#80087c" stroke-width="0.5" stroke-linejoin="round" />
<ellipse cx="1321" cy="505" rx="6.5" ry="6" fill="#e020e0" stroke="#80087c" stroke-width="0.4" />
<path d="M1327.0 492.0L1324.2 531.0" fill="none" stroke="#c010c0" stroke-width="2.6" stroke-linejoin="round" />
<path d="M1323.5 540.0L1320.2 530.7L1328.1 531.3Z" fill="#c010c0" stroke="#80087c" stroke-width="0.5" stroke-linejoin="round" />
<ellipse cx="1366" cy="512" rx="6.5" ry="6" fill="#e020e0" stroke="#80087c" stroke-width="0.4" />
<path d="M1372.0 499.0L1369.2 538.0" fill="none" stroke="#c010c0" stroke-width="2.6" stroke-linejoin="round" />
<path d="M1368.5 547.0L1365.2 537.7L1373.1 538.3Z" fill="#c010c0" stroke="#80087c" stroke-width="0.5" stroke-linejoin="round" />
<path d="M1298 462l5-9M1343 470l4-8M1392 476l3-6" fill="none" stroke="#c010c0" stroke-width="2" stroke-linejoin="round" />
<g font-family="Liberation Sans, sans-serif" fill="#0000f0" font-size="20">
<text x="1392" y="463" textLength="52" lengthAdjust="spacingAndGlyphs">Point1</text>
<text x="1033" y="652" textLength="52" lengthAdjust="spacingAndGlyphs">Point1</text>
<text x="709" y="333" textLength="52" lengthAdjust="spacingAndGlyphs" fill-opacity=".55">Point1</text>
<text x="677" y="402" textLength="50" lengthAdjust="spacingAndGlyphs" fill-opacity=".55">Point1</text>
</g>
<path d="M1388 467.500h7M1391.500 464v7" fill="none" stroke="#0000f0" stroke-width="1.8" stroke-linejoin="round" />
<path d="M1031 654h6M1034 651v6" fill="none" stroke="#0000f0" stroke-width="1.8" stroke-linejoin="round" /></svg>
<!-- viewport overlays -->
<span class="t" style="top:163.0px;font-size:16px;line-height:22px;color:#1c1c1c;letter-spacing:-0.2px;left:252px;">模型名称: <span style="font-size:14px;letter-spacing:0px">suspension</span></span>
<span class="t" style="top:183.0px;font-size:16px;line-height:22px;color:#1c1c1c;letter-spacing:-0.2px;left:252px;">算例名称: <span style="font-size:14px;letter-spacing:.7px">M(-Default-)</span></span>
<span class="t" style="top:203.0px;font-size:16px;line-height:22px;color:#1c1c1c;letter-spacing:-0.2px;left:252px;">图解类型: 静应力分析 节应力 应力<span style="font-size:14px">1</span></span>
<span class="t" style="top:223.0px;font-size:16px;line-height:22px;color:#1c1c1c;letter-spacing:-0.2px;left:252px;">变形比例: <span style="font-size:14px;letter-spacing:-.25px">2.5358</span></span>
<svg style="left:236.9875px;top:159.5px;" width="4.5249999999999995" height="7.0" viewBox="0 0 4.5249999999999995 7.0"><path d="M0 0V7.0L4.0249999999999995 3.5Z" fill="#333"/></svg>
<div style="left:251.5px;top:153px;width:167.5px;height:23px;background:rgba(233,243,252,.62);border:1px solid #3a8ad0;box-sizing:border-box;"></div>
<svg style="left:258.5px;top:154.5px;" width="15" height="15" viewBox="70 218 114 114"><path d="M75 265L100 240L122 250V288L150 300L178 290V305L130 328L75 300Z" fill="#f4c634" stroke="#7a5a00" stroke-width="5" stroke-linejoin="round"/><path d="M75 265L97 278L122 262M97 278V312M130 328V296" fill="none" stroke="#7a5a00" stroke-width="4"/><path d="M97 278L122 262V288L130 296V328L97 312Z" fill="#d8a410"/><path d="M120 240L148 225L178 240V290L150 300L120 288Z" fill="#7cc8ec" stroke="#1d5a86" stroke-width="5" stroke-linejoin="round"/><path d="M120 240L150 255L178 240M150 255V300" fill="none" stroke="#1d5a86" stroke-width="4"/><path d="M150 255L178 240V290L150 300Z" fill="#4a9ed0"/></svg><svg style="left:253.1px;top:158.58px;" width="8.8" height="15.84" viewBox="0 0 10 18"><rect x=".5" y=".5" width="9" height="17" rx="4.500" fill="#222"/><circle cx="5" cy="5" r="2.600" fill="#e22"/><circle cx="5" cy="13" r="2.600" fill="#2a2"/><circle cx="4.300" cy="4.300" r=".9" fill="#fbb"/><circle cx="4.300" cy="12.300" r=".9" fill="#bfb"/></svg>
<span class="t" style="top:156.0px;font-size:16px;line-height:22px;color:#111;letter-spacing:-0.25px;left:277px;">suspension&nbsp; (Defa...</span>
<svg style="left:898px;top:124px;" width="22" height="22" viewBox="0 0 22 22"><circle cx="13.500" cy="8.500" r="6.300" fill="#f4f8fb" stroke="#888" stroke-width="1.200"/><path d="M13.500 4.500v8M9.500 8.500h8" stroke="#666" stroke-width="1" stroke-dasharray="2 4"/><path d="M9 13L2.500 19.500" stroke="#6aa6cc" stroke-width="2.800" stroke-linecap="round"/></svg>
<svg style="left:924px;top:124px;" width="22" height="22" viewBox="0 0 22 22"><rect x="9" y="1.500" width="11.500" height="11.500" fill="none" stroke="#444" stroke-width="1" stroke-dasharray="3 2"/><circle cx="12" cy="9" r="6.300" fill="#eaf3f9" stroke="#888" stroke-width="1.200"/><path d="M7.500 13.500L2 19.500" stroke="#6aa6cc" stroke-width="2.800" stroke-linecap="round"/></svg>
<svg style="left:950px;top:123px;" width="22" height="22" viewBox="0 0 22 22"><path d="M2 13l12-9 4 4-11 10c-2 1-5-3-5-5z" fill="#e4e4e4" stroke="#888" stroke-width="1"/><ellipse cx="16" cy="6" rx="2" ry="3.300" transform="rotate(-45 16 6)" fill="#f4f4f4" stroke="#888"/><path d="M20 15h-8m3-3l-3.500 3 3.500 3" fill="none" stroke="#3a8ac8" stroke-width="2"/></svg>
<svg style="left:976px;top:124px;" width="22" height="22" viewBox="0 0 22 22"><path d="M2 8c0-3 4-5 9-5s9 2 9 5v8l-4.500 3v-8.500c0-1.500-2-2.500-4.500-2.500s-4.500 1-4.500 2.500v8.500l-4.500-3z" fill="#e8eef2" stroke="#667" stroke-width="1"/><path d="M2 9.500l4.500 2.500v7l-4.500-3zM15.500 12l4.500-2.500v6.500l-4.500 3z" fill="#6aa8d0" stroke="#345" stroke-width=".8"/><path d="M2.500 12.500l3.500 3M2.500 14.500l3.500 3M3 10.500l3 3M16 14l3.500-3M16 16l3.500-3M16 18l3.500-3" stroke="#234" stroke-width=".6"/></svg>
<svg style="left:1002px;top:123px;" width="22" height="22" viewBox="0 0 22 22"><path d="M2 12l11-8 3 4-10 9c-2 1-4-3-4-5z" fill="#e4e4e4" stroke="#888" stroke-width="1"/><path d="M6 1h7l-3 4h4l-8 7 2-5H4z" fill="#f8a020" stroke="#d06000" stroke-width=".6"/></svg><span class="t" style="top:130.0px;font-size:13px;line-height:18px;color:#3a8ac8;font-weight:bold;left:819px;width:400px;text-align:center;font-family:'Liberation Serif',serif;">A</span>
<svg style="left:1028px;top:123px;" width="22" height="22" viewBox="0 0 22 22"><path d="M2 8l5-6h12v12l-5 6" fill="#fff" stroke="#555" stroke-width="1"/><rect x="2" y="8" width="12" height="12" fill="#5ab0dc" stroke="#345" stroke-width="1"/><path d="M14 8l5-6M14 8v12" stroke="#555" stroke-width="1"/><path d="M11 2v6M19 10h-5" stroke="#333" stroke-width=".8"/></svg>
<svg style="left:1055.5px;top:133.5px;" width="6" height="3.5" viewBox="0 0 6 3.5"><path d="M0 0H6L3 3Z" fill="#b0b0b0"/></svg>
<svg style="left:1069px;top:123px;" width="21" height="22" viewBox="0 0 21 22"><path d="M2 4l8-3 9 2v15l-9 3-8-3z" fill="#fff" stroke="#666" stroke-width="1"/><path d="M2 4l8 2v15l-8-3z" fill="#6ab8dc" stroke="#345" stroke-width=".8"/><path d="M10 6l9-3" stroke="#666"/><path d="M2 4l8-3 9 2-9 3z" fill="#d8ecf6" stroke="#567" stroke-width=".8"/></svg>
<svg style="left:1095px;top:133.5px;" width="6" height="3.5" viewBox="0 0 6 3.5"><path d="M0 0H6L3 3Z" fill="#b0b0b0"/></svg>
<svg style="left:1108px;top:125px;" width="22" height="20" viewBox="0 0 22 20"><path d="M1 10c3-5 6-7 10-7s7 2 10 7c-3 5-6 7-10 7s-7-2-10-7z" fill="#f0f0f0" stroke="#bbb" stroke-width="1"/><circle cx="11" cy="9.500" r="4" fill="#888"/><path d="M11 1v18" stroke="#888" stroke-width="1"/></svg>
<svg style="left:1135px;top:133.5px;" width="6" height="3.5" viewBox="0 0 6 3.5"><path d="M0 0H6L3 3Z" fill="#b0b0b0"/></svg>
<svg style="left:1149px;top:124px;" width="24" height="22" viewBox="0 0 24 22"><defs><clipPath id="b1"><circle cx="9" cy="9" r="8.500"/></clipPath><radialGradient id="b1g" cx=".35" cy=".3"><stop offset="0" stop-color="#fff" stop-opacity=".75"/><stop offset=".6" stop-color="#fff" stop-opacity="0"/></radialGradient></defs><g clip-path="url(#b1)"><rect width="18" height="18" fill="#3a6ed0"/><path d="M9 9L8 0h10v10z" fill="#dc3030"/><path d="M9 9L0 9v9h9z" fill="#38a838"/><path d="M9 9l9 1v8H9.500z" fill="#e8b830"/><circle cx="9" cy="9" r="8.500" fill="url(#b1g)"/></g><circle cx="9" cy="9" r="8.500" fill="none" stroke="#888" stroke-width=".6"/><path d="M21 9l-8 8-2.500 4 4-2.500 8-8z" fill="#fc6" stroke="#643" stroke-width=".8"/><path d="M19 11l2 2" stroke="#e33" stroke-width="2"/></svg>
<svg style="left:1175px;top:124px;" width="22" height="22" viewBox="0 0 22 22"><defs><clipPath id="b2"><circle cx="9" cy="9" r="8.500"/></clipPath><radialGradient id="b2g" cx=".35" cy=".3"><stop offset="0" stop-color="#fff" stop-opacity=".75"/><stop offset=".6" stop-color="#fff" stop-opacity="0"/></radialGradient></defs><g clip-path="url(#b2)"><rect width="18" height="18" fill="#3a6ed0"/><path d="M9 9L8 0h10v10z" fill="#dc3030"/><path d="M9 9L0 9v9h9z" fill="#38a838"/><path d="M9 9l9 1v8H9.500z" fill="#e8b830"/><circle cx="9" cy="9" r="8.500" fill="url(#b2g)"/></g><circle cx="9" cy="9" r="8.500" fill="none" stroke="#888" stroke-width=".6"/><rect x="0" y="13" width="19" height="8" fill="#333"/><g fill="#fff"><rect x="2" y="13" width="3" height="3"/><rect x="8" y="13" width="3" height="3"/><rect x="14" y="13" width="3" height="3"/><rect x="5" y="17" width="3" height="3"/><rect x="11" y="17" width="3" height="3"/></g></svg>
<svg style="left:1201.5px;top:133.5px;" width="6" height="3.5" viewBox="0 0 6 3.5"><path d="M0 0H6L3 3Z" fill="#b0b0b0"/></svg>
<svg style="left:1215px;top:126px;" width="20" height="18" viewBox="0 0 20 18"><defs><linearGradient id="mon" x1="0" y1="0" x2="1" y2="1"><stop offset="0" stop-color="#c8c8c8"/><stop offset="1" stop-color="#f4f4f4"/></linearGradient></defs><rect x="1" y="1" width="18" height="12" fill="url(#mon)" stroke="#666" stroke-width="1.200"/><path d="M10 13v3M6 16.500h8" stroke="#555" stroke-width="1.400"/></svg>
<svg style="left:1241.5px;top:133.5px;" width="6" height="3.5" viewBox="0 0 6 3.5"><path d="M0 0H6L3 3Z" fill="#b0b0b0"/></svg>
<svg style="left:1791px;top:128px;" width="13" height="14" viewBox="0 0 13 14"><rect x=".5" y=".5" width="11" height="13" fill="none" stroke="#a8a8a8"/><path d="M5.500 4.500v5l-3.500-2.500z" fill="#a8a8a8"/><path d="M5.500 2v10" stroke="#a8a8a8" stroke-width=".8"/></svg>
<svg style="left:1817px;top:128px;" width="13" height="14" viewBox="0 0 13 14"><rect x=".5" y=".5" width="11" height="13" fill="none" stroke="#a8a8a8"/><path d="M7 4.500v5l3.500-2.500z" fill="#a8a8a8"/><path d="M7 2v10" stroke="#a8a8a8" stroke-width=".8"/></svg>
<div style="left:1844px;top:138px;width:10px;height:2.5px;background:#a8a8a8;"></div>
<svg style="left:1868px;top:128px;" width="14" height="13" viewBox="0 0 14 13"><path d="M4 3.500V1h9v7h-2.500" fill="none" stroke="#a8a8a8" stroke-width="1.200"/><rect x="1" y="4" width="9" height="7" fill="none" stroke="#a8a8a8" stroke-width="1.400"/></svg>
<svg style="left:1896px;top:130px;" width="11" height="11" viewBox="0 0 11 11"><path d="M.5.500l10 10M10.500.500l-10 10" stroke="#a8a8a8" stroke-width="1.300"/></svg>
<div style="left:1887.5px;top:203.5px;width:33px;height:30.2px;background:#f8f8f8;border:1px solid #9a9a9a;border-right:none;box-sizing:border-box;"></div>
<div style="left:1887.5px;top:233.35px;width:33px;height:30.2px;background:#d4d4d4;border:1px solid #9a9a9a;border-right:none;box-sizing:border-box;"></div>
<div style="left:1887.5px;top:263.2px;width:33px;height:30.2px;background:#d4d4d4;border:1px solid #9a9a9a;border-right:none;box-sizing:border-box;"></div>
<div style="left:1887.5px;top:293.05px;width:33px;height:30.2px;background:#d4d4d4;border:1px solid #9a9a9a;border-right:none;box-sizing:border-box;"></div>
<div style="left:1887.5px;top:322.9px;width:33px;height:30.2px;background:#d4d4d4;border:1px solid #9a9a9a;border-right:none;box-sizing:border-box;"></div>
<div style="left:1887.5px;top:352.75px;width:33px;height:30.2px;background:#d4d4d4;border:1px solid #9a9a9a;border-right:none;box-sizing:border-box;"></div>
<div style="left:1887.5px;top:382.6px;width:33px;height:30.2px;background:#d4d4d4;border:1px solid #9a9a9a;border-right:none;box-sizing:border-box;"></div>
<svg style="left:1894.0px;top:208.0px;" width="20" height="20" viewBox="0 0 20 20"><path d="M3.400 10.500V18.700H16.600V10.500" fill="#fafafa" stroke="#2e2e2e" stroke-width="1.300"/><rect x="7.500" y="11.800" width="5" height="6.900" fill="#f4f4f4" stroke="#2e2e2e" stroke-width="1.300"/><rect x="10.800" y="14.500" width="1.700" height="1.700" fill="#2e2e2e"/><path d="M1.200 10.800L10 2l8.800 8.800" fill="none" stroke="#1d5f8a" stroke-width="2.600" stroke-linejoin="miter"/><path d="M3 10.200L10 3.300l7 6.900" fill="none" stroke="#6aa8d0" stroke-width=".8"/></svg>
<svg style="left:1895.0px;top:237.0px;" width="18" height="20" viewBox="0 0 18 20"><g fill="#f4f4f4" stroke="#444" stroke-width="1"><path d="M1.500 5.500l3-2 3 1.500v11.500l-3 2.500-3-2z"/><path d="M4.500 3.500l0 15.500M6 3.500l3-2 3 1.500v11.500l-3 2.500v-14z"/><path d="M10.500 2.500l3-2 3 1.500v11.500l-3 2.500v-14z"/></g></svg>
<svg style="left:1893.0px;top:268.5px;" width="22" height="17" viewBox="0 0 22 17"><path d="M1 16V1h6l1.500 2h8v3" fill="#eee" stroke="#555" stroke-width="1.100"/><path d="M1 16l4-10h16l-4 10z" fill="#fafafa" stroke="#555" stroke-width="1.100"/></svg>
<svg style="left:1895.0px;top:299.0px;" width="18" height="16" viewBox="0 0 18 16"><rect x=".8" y=".8" width="16.400" height="14.400" rx="1" fill="#fff" stroke="#444" stroke-width="1.200"/><path d="M3 3.500h7v3h-2v3h3v3h-8v-3h3v-3h-3z" fill="#f4b820" stroke="#a67400" stroke-width=".7"/><rect x="12" y="3" width="3.500" height="3" fill="#f4b820" stroke="#a67400" stroke-width=".7"/><rect x="12.500" y="8" width="3" height="5" fill="#ccc" stroke="#666" stroke-width=".7"/></svg>
<svg style="left:1895.0px;top:328.0px;" width="18" height="18" viewBox="0 0 18 18"><defs><clipPath id="b3"><circle cx="9" cy="9" r="8.500"/></clipPath><radialGradient id="b3g" cx=".35" cy=".3"><stop offset="0" stop-color="#fff" stop-opacity=".75"/><stop offset=".6" stop-color="#fff" stop-opacity="0"/></radialGradient></defs><g clip-path="url(#b3)"><rect width="18" height="18" fill="#3a6ed0"/><path d="M9 9L8 0h10v10z" fill="#dc3030"/><path d="M9 9L0 9v9h9z" fill="#38a838"/><path d="M9 9l9 1v8H9.500z" fill="#e8b830"/><circle cx="9" cy="9" r="8.500" fill="url(#b3g)"/></g><circle cx="9" cy="9" r="8.500" fill="none" stroke="#888" stroke-width=".6"/></svg>
<svg style="left:1895.0px;top:359.0px;" width="18" height="17" viewBox="0 0 18 17"><rect x=".8" y=".8" width="16.400" height="15.400" rx="1" fill="#fff" stroke="#234" stroke-width="1.200"/><rect x=".8" y=".8" width="16.400" height="3" fill="#3a8ac8" stroke="#234" stroke-width="1"/><g fill="#3a8ac8"><rect x="3" y="6" width="3.500" height="2"/><rect x="3" y="9.300" width="3.500" height="2"/><rect x="3" y="12.600" width="3.500" height="2"/></g><path d="M8 7h7M8 10.300h7M8 13.600h7" stroke="#234" stroke-width="1"/></svg>
<svg style="left:1894.0px;top:387.5px;" width="20" height="20" viewBox="0 0 20 20"><defs><radialGradient id="gl" cx=".4" cy=".3"><stop offset="0" stop-color="#7ac0f0"/><stop offset=".6" stop-color="#1a5a9a"/><stop offset="1" stop-color="#0a2a5a"/></radialGradient></defs><circle cx="10" cy="10" r="9.500" fill="url(#gl)"/><circle cx="10" cy="10" r="5" fill="none" stroke="#bfe0ff" stroke-width="1"/><path d="M8.500 7.500v5l4-2.500z" fill="#dff"/></svg>
<span class="t" style="top:297.0px;font-size:14.5px;line-height:20px;color:#000;letter-spacing:0.3px;left:1584px;font-family:"Liberation Sans",sans-serif;">von Mises (N/mm^2 (MPa))</span>
<div style="left:1584px;top:352.5px;width:32px;height:400px;background:linear-gradient(180deg,#f00 0%,#ff0 22.500%,#0f0 49.500%,#0ff 70.500%,#00f 100%);"></div>
<div style="left:1584px;top:352px;width:36px;height:1px;background:#000;"></div>
<div style="left:1584px;top:752px;width:36px;height:1px;background:#000;"></div>
<span class="t" style="top:337.0px;font-size:13.5px;line-height:19px;color:#000;letter-spacing:0.6px;left:1632px;font-family:"Liberation Sans",sans-serif;">2.41e+02</span>
<span class="t" style="top:377.0px;font-size:13.5px;line-height:19px;color:#000;letter-spacing:0.6px;left:1632px;font-family:"Liberation Sans",sans-serif;">2.17e+02</span>
<div style="left:1616px;top:392px;width:4px;height:1px;background:#000;"></div>
<span class="t" style="top:417.5px;font-size:13.5px;line-height:19px;color:#000;letter-spacing:0.6px;left:1632px;font-family:"Liberation Sans",sans-serif;">1.93e+02</span>
<div style="left:1616px;top:432px;width:4px;height:1px;background:#000;"></div>
<span class="t" style="top:457.5px;font-size:13.5px;line-height:19px;color:#000;letter-spacing:0.6px;left:1632px;font-family:"Liberation Sans",sans-serif;">1.69e+02</span>
<div style="left:1616px;top:472px;width:4px;height:1px;background:#000;"></div>
<span class="t" style="top:497.5px;font-size:13.5px;line-height:19px;color:#000;letter-spacing:0.6px;left:1632px;font-family:"Liberation Sans",sans-serif;">1.45e+02</span>
<div style="left:1616px;top:512px;width:4px;height:1px;background:#000;"></div>
<span class="t" style="top:537.5px;font-size:13.5px;line-height:19px;color:#000;letter-spacing:0.6px;left:1632px;font-family:"Liberation Sans",sans-serif;">1.21e+02</span>
<div style="left:1616px;top:552px;width:4px;height:1px;background:#000;"></div>
<span class="t" style="top:577.5px;font-size:13.5px;line-height:19px;color:#000;letter-spacing:0.6px;left:1632px;font-family:"Liberation Sans",sans-serif;">9.66e+01</span>
<div style="left:1616px;top:592px;width:4px;height:1px;background:#000;"></div>
<span class="t" style="top:617.5px;font-size:13.5px;line-height:19px;color:#000;letter-spacing:0.6px;left:1632px;font-family:"Liberation Sans",sans-serif;">7.24e+01</span>
<div style="left:1616px;top:632px;width:4px;height:1px;background:#000;"></div>
<span class="t" style="top:657.5px;font-size:13.5px;line-height:19px;color:#000;letter-spacing:0.6px;left:1632px;font-family:"Liberation Sans",sans-serif;">4.83e+01</span>
<div style="left:1616px;top:672px;width:4px;height:1px;background:#000;"></div>
<span class="t" style="top:697.5px;font-size:13.5px;line-height:19px;color:#000;letter-spacing:0.6px;left:1632px;font-family:"Liberation Sans",sans-serif;">2.41e+01</span>
<div style="left:1616px;top:712px;width:4px;height:1px;background:#000;"></div>
<span class="t" style="top:737.5px;font-size:13.5px;line-height:19px;color:#000;letter-spacing:0.6px;left:1632px;font-family:"Liberation Sans",sans-serif;">6.41e-06</span>
<svg style="left:1551px;top:781px;" width="34" height="12" viewBox="0 0 34 12"><path d="M1 6h22" stroke="#f00" stroke-width="2"/><path d="M21 1l12 5-12 5z" fill="#f00"/></svg>
<span class="t" style="top:777.0px;font-size:14.5px;line-height:20px;color:#000;letter-spacing:-0.1px;left:1588px;">屈服力: <span style="letter-spacing:.55px">6.20e+02</span></span>
<svg style="left:268px;top:910px;" width="70" height="55" viewBox="0 0 70 55"><path d="M13 13l5-4 23 3.500" stroke="#e81010" stroke-width="3" fill="none" stroke-linejoin="round"/><path d="M38 9l11 4.500-11 3z" fill="#e81010"/><path d="M12 13l-1.500 24" stroke="#1010d8" stroke-width="3"/><path d="M6.500 33l3.500 10 4.500-10z" fill="#1010d8"/><circle cx="10" cy="16" r="3.800" fill="#18c818"/><path d="M8 13l5-5 1.500 5" fill="#18c818"/></svg>
<span class="t" style="top:914.5px;font-size:11px;line-height:15px;color:#e81010;left:127px;width:400px;text-align:center;">x</span>
<span class="t" style="top:950.5px;font-size:9px;line-height:13px;color:#1010d8;left:79px;width:400px;text-align:center;">Z</span>
<div style="left:1729px;top:932px;width:189px;height:46px;background:linear-gradient(180deg,#7cdc68 0%,#48c030 45%,#1fa612 100%);border:2px solid #b8eab0;border-radius:6px;box-sizing:border-box;box-shadow:0 0 1px #9c9;overflow:hidden;"><div style="left:135px;top:-4px;width:60px;height:56px;background:rgba(255,255,255,.18);border-left:1.5px solid rgba(255,255,255,.6);transform:skewX(12deg);"></div></div>
<span class="t" style="top:938.0px;font-size:23px;line-height:32px;color:#fff;left:1550px;width:400px;text-align:center;">中</span>
<svg style="left:1765px;top:946px;" width="12" height="16" viewBox="0 0 12 16"><path d="M1 1c2 0 3 1.500 3.500 3.500" stroke="#fff" stroke-width="2" fill="none"/><circle cx="7.500" cy="11.500" r="2.600" fill="none" stroke="#fff" stroke-width="1.700"/></svg>
<span class="t" style="top:938.0px;font-size:23px;line-height:32px;color:#fff;left:1593px;width:400px;text-align:center;">简</span>
<svg style="left:1807px;top:947px;" width="20" height="15" viewBox="0 0 20 15"><path d="M6 1c1.500 1.500 6.500 1.500 8 0l5.500 3-2 4-2.500-1v7.500h-10v-7.500l-2.500 1-2-4z" fill="#fff"/></svg>
<svg style="left:1829px;top:948px;" width="12" height="13" viewBox="0 0 12 13"><path d="M6 .5a6 6 0 1 1-5.500 8.500 5 5 0 0 0 5.500-8.500z" fill="#fff"/></svg>
<svg style="left:1846px;top:945px;" width="19" height="19" viewBox="0 0 19 19"><path d="M15.57 7.82L18.39 8.07L18.39 10.93L15.57 11.18L14.98 12.61L16.80 14.77L14.77 16.80L12.61 14.98L11.18 15.57L10.93 18.39L8.07 18.39L7.82 15.57L6.39 14.98L4.23 16.80L2.20 14.77L4.02 12.61L3.43 11.18L0.61 10.93L0.61 8.07L3.43 7.82L4.02 6.39L2.20 4.23L4.23 2.20L6.39 4.02L7.82 3.43L8.07 0.61L10.93 0.61L11.18 3.43L12.61 4.02L14.77 2.20L16.80 4.23L14.98 6.39ZM9.5 6.3a3.2 3.2 0 1 0 .01 0z" fill="#fff" fill-rule="evenodd"/></svg>
<span class="t" style="top:928.0px;font-size:44px;line-height:50px;color:#fff;font-weight:bold;left:1693px;width:400px;text-align:center;font-style:italic;transform:scaleX(1.25) rotate(-8deg);">S</span>
<!-- top -->
<div style="left:0px;top:0px;width:1920px;height:32px;background:#f7f7f7;"></div>
<div style="left:715.7px;top:0px;width:1px;height:32px;background:#9a9a9a;"></div>
<div style="left:716.7px;top:0px;width:3px;height:32px;background:linear-gradient(90deg,#cfcfcf,#f7f7f7);"></div>
<div style="left:0px;top:32px;width:1920px;height:1px;background:#8c8c8c;"></div>
<div style="left:0px;top:33px;width:1920px;height:86px;background:#f7f7f7;"></div>
<div style="left:0px;top:119px;width:1920px;height:1px;background:#8c8c8c;"></div>
<div style="left:1918px;top:33px;width:1px;height:86px;background:#b0b0b0;"></div>
<div style="left:10px;top:0px;width:145px;height:36px;background:linear-gradient(160deg,#fff 40%,#e2e2e2);border:1px solid #b4b4b4;border-top:none;box-sizing:border-box;box-shadow:0 1px 1px rgba(0,0,0,.15);"></div>
<svg style="left:0px;top:0px;" width="54" height="30" viewBox="0 0 324 180"><g fill="none" stroke="#d9231f"><path d="M148 14C185 8 224 24 213 50C206 66 186 72 170 79" stroke-width="13"/><path d="M263 78C240 68 211 78 212 96C213 114 252 112 250 132C248 150 222 155 202 150" stroke-width="15"/></g><path d="M197 56C196 100 150 150 96 174C150 162 196 122 210 74Z" fill="#d9231f"/></svg>
<span class="t" style="top:10.5px;font-size:14.5px;line-height:20px;color:#d9231f;left:49px;font-style:italic;"><b>SOLID</b>WORKS</span>
<div style="left:175px;top:4px;width:59px;height:26px;background:#fff;border:1px solid #c9c9c9;box-sizing:border-box;"></div>
<span class="t" style="top:7.0px;font-size:14px;line-height:20px;color:#1a1a1a;left:183px;">文件(<u>F</u>)</span>
<span class="t" style="top:7.0px;font-size:14px;line-height:20px;color:#1a1a1a;left:242px;">编辑(<u>E</u>)</span>
<span class="t" style="top:7.0px;font-size:14px;line-height:20px;color:#1a1a1a;left:301px;">视图(<u>V</u>)</span>
<span class="t" style="top:7.0px;font-size:14px;line-height:20px;color:#1a1a1a;left:362px;">插入(<u>I</u>)</span>
<span class="t" style="top:7.0px;font-size:14px;line-height:20px;color:#1a1a1a;left:418.5px;">工具(<u>T</u>)</span>
<span class="t" style="top:7.0px;font-size:14px;line-height:20px;color:#1a1a1a;left:477px;"><u>S</u>imulation</span>
<span class="t" style="top:7.0px;font-size:14px;line-height:20px;color:#1a1a1a;left:557.5px;">窗口(<u>W</u>)</span>
<span class="t" style="top:7.0px;font-size:14px;line-height:20px;color:#1a1a1a;left:622.5px;">帮助(<u>H</u>)</span>
<svg style="left:694.0px;top:10.0px;" width="14" height="14" viewBox="0 0 14 14"><path d="M8.500 1l4.500 4.500-1.500.5-2.500 2.500.3 2.500-1.500 1-5.800-5.800 1-1.500 2.500.3 2.500-2.500z" fill="#2a86b6"/><path d="M4.500 9.500L1 13" stroke="#2a86b6" stroke-width="1.600"/></svg>
<svg style="left:734.0px;top:7.0px;" width="20" height="20" viewBox="0 0 20 20"><path d="M3.400 10.500V18.700H16.600V10.500" fill="#fafafa" stroke="#2e2e2e" stroke-width="1.300"/><rect x="7.500" y="11.800" width="5" height="6.900" fill="#f4f4f4" stroke="#2e2e2e" stroke-width="1.300"/><rect x="10.800" y="14.500" width="1.700" height="1.700" fill="#2e2e2e"/><path d="M1.200 10.800L10 2l8.800 8.800" fill="none" stroke="#14466a" stroke-width="2.600" stroke-linejoin="miter"/><path d="M3 10.200L10 3.300l7 6.900" fill="none" stroke="#6aa8d0" stroke-width=".8"/></svg>
<svg style="left:762.0px;top:7.0px;" width="16" height="20" viewBox="0 0 16 20"><path d="M1.5 1.5h8.5l4.5 4.5v12.5h-13z" fill="#fff" stroke="#444" stroke-width="1.3"/><path d="M10 1.5v4.5h4.5" fill="#ddd" stroke="#444" stroke-width="1"/></svg>
<svg style="left:786.0px;top:15.25px;" width="7.0" height="4.0" viewBox="0 0 7.0 4.0"><path d="M0 0H7.0L3.5 3.5Z" fill="#333"/></svg>
<svg style="left:799.0px;top:7.0px;" width="22" height="20" viewBox="0 0 22 20"><path d="M1.5 18.5v-14h5l1.5 2h7v3" fill="#eee" stroke="#444" stroke-width="1.3"/><path d="M1.5 18.5l4-9.5h15l-4 9.5z" fill="#f4f4f4" stroke="#444" stroke-width="1.3"/><path d="M10 1c3 0 4.5 1.5 4.5 4h2.500l-4 4.500-4-4.500h2.500c0-1.500-.5-2.500-2.500-3z" fill="#2a9d2a" stroke="#167016" stroke-width=".6"/></svg>
<svg style="left:826.0px;top:15.25px;" width="7.0" height="4.0" viewBox="0 0 7.0 4.0"><path d="M0 0H7.0L3.5 3.5Z" fill="#333"/></svg>
<svg style="left:840.0px;top:7.0px;" width="20" height="20" viewBox="0 0 20 20"><path d="M1.5 1.5h12l2 2v11.500h-14z" fill="#2e6f9e" stroke="#1d4f76" stroke-width="1"/><rect x="4" y="2" width="8" height="5" fill="#e8e8e8"/><rect x="4.500" y="9.500" width="7" height="5" fill="#999"/><path d="M13.500 8.500l5.500 10h-11z" fill="#fc2" stroke="#c80" stroke-width=".8"/><path d="M13.500 12v3.500M13.500 16.500v1" stroke="#000" stroke-width="1.3"/></svg>
<svg style="left:866.0px;top:15.25px;" width="7.0" height="4.0" viewBox="0 0 7.0 4.0"><path d="M0 0H7.0L3.5 3.5Z" fill="#333"/></svg>
<svg style="left:879.0px;top:7.0px;" width="22" height="20" viewBox="0 0 22 20"><rect x="5.500" y="1.500" width="11" height="7" fill="#fff" stroke="#555" stroke-width="1"/><rect x="1.500" y="8" width="19" height="8" rx="1.500" fill="#2e7fb5" stroke="#1d4f76" stroke-width="1"/><rect x="3" y="12.500" width="16" height="2" fill="#8cc6e8"/><rect x="4.500" y="15.500" width="13" height="3.500" fill="#fff" stroke="#555" stroke-width="1"/></svg>
<svg style="left:906.0px;top:15.25px;" width="7.0" height="4.0" viewBox="0 0 7.0 4.0"><path d="M0 0H7.0L3.5 3.5Z" fill="#333"/></svg>
<svg style="left:921.0px;top:9.0px;" width="18" height="16" viewBox="0 0 18 16"><path d="M6 2L1.500 6.500 6 9.500V7.500c4-1 7.500.5 7.500 4 0 1.500-.8 2.500-2 3.500 3-.8 5-3 5-6 0-4-4.500-6.500-10.500-5z" fill="#d0d0d0" stroke="#c0c0c0" stroke-width=".6"/></svg>
<svg style="left:946.0px;top:15.25px;" width="7.0" height="4.0" viewBox="0 0 7.0 4.0"><path d="M0 0H7.0L3.5 3.5Z" fill="#aaa"/></svg>
<div style="left:957px;top:4px;width:40px;height:26px;background:#fff;border:1px solid #999;box-sizing:border-box;"></div>
<div style="left:957px;top:4px;width:27px;height:26px;background:#b4b4b4;border:1px solid #8a8a8a;box-sizing:border-box;"></div>
<svg style="left:963.0px;top:7.0px;" width="14" height="20" viewBox="0 0 14 20"><path d="M1.500 1.500v15l3.800-3.500 2.600 5.800 2.400-1.100-2.600-5.600h5z" fill="#fff" stroke="#111" stroke-width="1.200" stroke-linejoin="round"/></svg>
<svg style="left:986.0px;top:15.25px;" width="7.0" height="4.0" viewBox="0 0 7.0 4.0"><path d="M0 0H7.0L3.5 3.5Z" fill="#333"/></svg>
<svg style="left:1004.75px;top:7.549999999999999px;" width="10.5" height="18.900000000000002" viewBox="0 0 10 18"><rect x=".5" y=".5" width="9" height="17" rx="4.500" fill="#222"/><circle cx="5" cy="5" r="2.600" fill="#e22"/><circle cx="5" cy="13" r="2.600" fill="#2a2"/><circle cx="4.300" cy="4.300" r=".9" fill="#fbb"/><circle cx="4.300" cy="12.300" r=".9" fill="#bfb"/></svg>
<svg style="left:1027.0px;top:8.0px;" width="18" height="18" viewBox="0 0 18 18"><rect x="1" y="1" width="16" height="16" rx="1" fill="#fff" stroke="#333" stroke-width="1.300"/><g fill="#2a7ab0" stroke="#1d4f76" stroke-width=".6"><rect x="3.500" y="3.500" width="3.500" height="2.600"/><rect x="3.500" y="7.700" width="3.500" height="2.600"/><rect x="3.500" y="11.900" width="3.500" height="2.600"/></g><path d="M8.500 4.800h6M8.500 9h6M8.500 13.200h6" stroke="#333" stroke-width="1.100"/></svg>
<svg style="left:1052.0px;top:7.0px;" width="20" height="20" viewBox="0 0 20 20"><path d="M16.02 8.14L18.18 8.60L18.18 11.40L16.02 11.86L15.57 12.94L16.78 14.79L14.79 16.78L12.94 15.57L11.86 16.02L11.40 18.18L8.60 18.18L8.14 16.02L7.06 15.57L5.21 16.78L3.22 14.79L4.43 12.94L3.98 11.86L1.82 11.40L1.82 8.60L3.98 8.14L4.43 7.06L3.22 5.21L5.21 3.22L7.06 4.43L8.14 3.98L8.60 1.82L11.40 1.82L11.86 3.98L12.94 4.43L14.79 3.22L16.78 5.21L15.57 7.06Z" fill="none" stroke="#333" stroke-width="1.1" stroke-linejoin="round"/><circle cx="10" cy="10" r="3" fill="none" stroke="#333" stroke-width="1.1"/></svg>
<svg style="left:1078.0px;top:15.25px;" width="7.0" height="4.0" viewBox="0 0 7.0 4.0"><path d="M0 0H7.0L3.5 3.5Z" fill="#333"/></svg>
<span class="t" style="top:7.0px;font-size:14px;line-height:20px;color:#1a1a1a;left:1266px;">suspension *</span>
<div style="left:1521px;top:2px;width:252px;height:29px;background:#ecedf2;border:1.5px solid #222;box-sizing:border-box;"></div>
<svg style="left:1528.0px;top:7.5px;" width="18" height="18" viewBox="0 0 18 18"><circle cx="9" cy="9" r="7.800" fill="#fff" stroke="#444" stroke-width="1.100"/></svg><span class="t" style="top:7.5px;font-size:13px;line-height:18px;color:#1e6ea8;font-weight:bold;left:1337px;width:400px;text-align:center;">?</span>
<span class="t" style="top:6.5px;font-size:15px;line-height:21px;color:#6a6a6a;left:1554px;">搜索 <span style="font-size:12.2px;letter-spacing:-.1px">SOLIDWORKS</span> 帮助</span>
<svg style="left:1730.45px;top:6.0px;" width="23.1" height="21.0" viewBox="0 0 22 20"><circle cx="14" cy="7.500" r="5.800" fill="#fff" fill-opacity=".8" stroke="#6a94b8" stroke-width="1.400"/><path d="M9.800 11.800L2.500 18.500" stroke="#6a94b8" stroke-width="2.800" stroke-linecap="round"/></svg>
<svg style="left:1760px;top:15.0px;" width="8" height="4.5" viewBox="0 0 8 4.5"><path d="M0 0H8L4 4Z" fill="#222"/></svg>
<svg style="left:1783.0px;top:8.0px;" width="14" height="18" viewBox="0 0 14 18"><circle cx="7" cy="4.800" r="3.600" fill="#ececec" stroke="#6a6a6a" stroke-width="1.100"/><path d="M1 17v-4.500c0-3 2.500-4.500 6-4.500s6 1.500 6 4.500v4.500z" fill="#e0e0e0" stroke="#7a7a7a" stroke-width="1.100"/></svg>
<span class="t" style="top:5.0px;font-size:17px;line-height:24px;color:#333;font-weight:bold;left:1616px;width:400px;text-align:center;">?</span>
<svg style="left:1831.5px;top:15.5px;" width="6" height="3.5" viewBox="0 0 6 3.5"><path d="M0 0H6L3 3Z" fill="#333"/></svg>
<div style="left:1850px;top:20px;width:10px;height:2.5px;background:#222;"></div>
<svg style="left:1874px;top:10px;" width="14" height="13" viewBox="0 0 14 13"><path d="M4 3.500V1h9v7h-2.500" fill="none" stroke="#333" stroke-width="1.200"/><rect x="1" y="4" width="9" height="7" fill="none" stroke="#333" stroke-width="1.400"/></svg>
<svg style="left:1901px;top:11px;" width="12" height="12" viewBox="0 0 12 12"><path d="M1 1l10 10M11 1L1 11" stroke="#333" stroke-width="1.500"/></svg>
<svg style="left:17.5px;top:43.0px;" width="22" height="22" viewBox="0 0 22 22"><defs><linearGradient id="ns" x1="0" y1="1" x2="1" y2="0"><stop offset="0" stop-color="#4c4"/><stop offset=".3" stop-color="#9d5"/><stop offset=".5" stop-color="#fc6"/><stop offset=".7" stop-color="#f88"/><stop offset="1" stop-color="#c7c"/></linearGradient></defs><path d="M11 11.500L18 19" stroke="#3a7aa8" stroke-width="3.400" stroke-linecap="round"/><circle cx="7.800" cy="8" r="6.200" fill="url(#ns)" stroke="#8a8a8a" stroke-width="1.200"/><path d="M17 0v7M13.500 3.500h7M14.500 1l5 5M19.500 1l-5 5" stroke="#f08000" stroke-width=".9"/></svg>
<span class="t" style="top:63.5px;font-size:14px;line-height:20px;color:#111;left:-171.5px;width:400px;text-align:center;">新算例</span>
<svg style="left:25.5px;top:104.5px;" width="6" height="3.5" viewBox="0 0 6 3.5"><path d="M0 0H6L3 3Z" fill="#444"/></svg>
<div style="left:56px;top:39px;width:1px;height:78px;background:#cfcfcf;"></div>
<svg style="left:74.0px;top:51.0px;" width="20" height="18" viewBox="0 0 20 18"><circle cx="3.500" cy="2.500" r="2.100" fill="#fff" stroke="#777" stroke-width="1"/><circle cx="3.500" cy="9" r="2.100" fill="#7cc4ec" stroke="#3a7aa8" stroke-width="1"/><circle cx="3.500" cy="15.500" r="2.100" fill="#fcc820" stroke="#b88a00" stroke-width="1"/><path d="M8 2.500h11M8 9h11M8 15.500h11" stroke="#111" stroke-width="1.800"/></svg>
<span class="t" style="top:71.5px;font-size:14px;line-height:20px;color:#111;left:-116px;width:400px;text-align:center;">应用材</span>
<span class="t" style="top:89.5px;font-size:14px;line-height:20px;color:#111;left:-116px;width:400px;text-align:center;">料</span>
<svg style="left:126.0px;top:50.0px;" width="20" height="20" viewBox="0 0 20 20"><path d="M6.500 3.500h8l4 4v12h-12z" fill="#fff" stroke="#333" stroke-width="1.200"/><path d="M14.500 3.500v4h4" fill="#ddd" stroke="#333" stroke-width="1"/><path d="M.5 1h8.500v5h-4v3h-4.500z" fill="#3c3" stroke="#222" stroke-width=".8"/><rect x="1" y="1.500" width="7.500" height="2" fill="#e22"/><rect x="1" y="3.400" width="7.500" height="1.400" fill="#fc0"/><rect x="1" y="6.500" width="3.500" height="2" fill="#24d"/><circle cx="12" cy="14" r="4.500" fill="#e0e0e0" stroke="#555" stroke-width="1"/><path d="M9.300 14l2.200 2.300 3.700-4.300" fill="none" stroke="#0a8a0a" stroke-width="2"/></svg>
<span class="t" style="top:71.5px;font-size:14px;line-height:20px;color:#111;left:-64px;width:400px;text-align:center;">仿真鉴</span>
<span class="t" style="top:89.5px;font-size:14px;line-height:20px;color:#111;left:-64px;width:400px;text-align:center;">别器</span>
<svg style="left:184.5px;top:43.0px;" width="20" height="22" viewBox="0 0 20 22"><path d="M2.500 7.500l5-5.500 5 1.500v4.500l5 1.500v5l-6 4-9-4z" fill="#ececec" stroke="#6a6a6a" stroke-width="1.100"/><path d="M2.500 7.500l6 2v4l3 1v4M8.500 9.500l4-1.500M11.500 14.500l6-4.500M7.500 2l0 0" fill="none" stroke="#8a8a8a" stroke-width="1"/><path d="M4 18l-1.500 3M7 19.500l-1.500 2.500M10 20.500l-1.500 2" stroke="#4a9acc" stroke-width="1"/></svg>
<span class="t" style="top:63.5px;font-size:14px;line-height:20px;color:#111;left:-5.5px;width:400px;text-align:center;">夹具顾问</span>
<svg style="left:191.5px;top:104.5px;" width="6" height="3.5" viewBox="0 0 6 3.5"><path d="M0 0H6L3 3Z" fill="#444"/></svg>
<svg style="left:264.5px;top:44.0px;" width="20" height="20" viewBox="0 0 20 20"><path d="M5 0v11" stroke="#1d6f9a" stroke-width="3"/><path d="M.5 9h9l-4.500 6.500z" fill="#1d6f9a"/><path d="M0 18.500h10" stroke="#222" stroke-width="1.700"/><rect x="13.300" y=".5" width="3.400" height="13" rx="1.700" fill="#fff" stroke="#1d4f76" stroke-width="1.100"/><path d="M15 4v9" stroke="#2a7ab0" stroke-width="1.200"/><circle cx="15" cy="15.500" r="3.400" fill="#3a8ac0" stroke="#1d4f76" stroke-width="1"/></svg>
<span class="t" style="top:63.5px;font-size:14px;line-height:20px;color:#111;left:74.5px;width:400px;text-align:center;">外部载荷顾问</span>
<svg style="left:271.5px;top:104.5px;" width="6" height="3.5" viewBox="0 0 6 3.5"><path d="M0 0H6L3 3Z" fill="#444"/></svg>
<svg style="left:344.525px;top:44.55px;" width="19.95" height="18.900000000000002" viewBox="0 0 19 18"><path d="M.8 4.500c0-2.200 2-3.500 5.700-3.500s5.700 1.300 5.700 3.500v2.500h-11.400z" fill="#d4d4d4" stroke="#444" stroke-width="1.100"/><path d="M4.500 1.200v5.500M8.500 1.200v5.500" stroke="#666" stroke-width=".8"/><path d="M3.500 7h6v8.500l-3 1.800-3-1.800z" fill="#e4e4e4" stroke="#444" stroke-width="1.100"/><path d="M3.500 9.500h6M3.500 12h6M3.500 14.500h6" stroke="#444" stroke-width=".9"/><path d="M14.500 .5l3 1-3 1 3 1-3 1 3 1-3 1 3 1-3 1 3 1-3 1 3 1-3 1 3 1-3 1 3 1-3 1" fill="none" stroke="#2a80b8" stroke-width="1"/></svg>
<span class="t" style="top:63.5px;font-size:14px;line-height:20px;color:#111;left:154.5px;width:400px;text-align:center;">连接顾问</span>
<svg style="left:351.5px;top:104.5px;" width="6" height="3.5" viewBox="0 0 6 3.5"><path d="M0 0H6L3 3Z" fill="#444"/></svg>
<svg style="left:405.0px;top:53.0px;" width="18" height="16" viewBox="0 0 18 16"><g stroke="#2a6a9a" stroke-width=".7"><path d="M1 11.500l8-4.500 8 3-7 5.500z" fill="#4a9ccc"/><path d="M1 9.500l8-4.500 8 3-7 5.500z" fill="#5aacd8"/><path d="M1 7.500l8-4.500 8 3-7 5.500z" fill="#6cbce4"/><path d="M1 5.500l8-4.500 8 3-7 5.500z" fill="#90d4f4"/></g></svg>
<span class="t" style="top:71.5px;font-size:14px;line-height:20px;color:#111;left:214px;width:400px;text-align:center;">壳体管</span>
<span class="t" style="top:89.5px;font-size:14px;line-height:20px;color:#111;left:214px;width:400px;text-align:center;">理器</span>
<svg style="left:469.5px;top:44.0px;" width="20" height="20" viewBox="0 0 20 20"><defs><linearGradient id="rb" gradientUnits="userSpaceOnUse" x1="3" y1="3" x2="16" y2="18"><stop offset="0" stop-color="#f01818"/><stop offset=".28" stop-color="#ffb400"/><stop offset=".45" stop-color="#f0f020"/><stop offset=".62" stop-color="#30d030"/><stop offset=".8" stop-color="#20c0e0"/><stop offset="1" stop-color="#2040e0"/></linearGradient></defs><path d="M1.500 5.500L8.500 1.500l4.500 1.500v5l4.500 1.500v5.500l-7.500 4.500L1.500 15z" fill="url(#rb)" stroke="#333" stroke-width=".9" stroke-linejoin="round"/><path d="M6.500 6.500L13 4.500M6.500 6.500v5l4 1.500 6.500-3.500M10.500 13v6" fill="none" stroke="#222" stroke-width=".9"/><path d="M6.500 6.500l6.500-2v3.500l4.500 1.500-7 3.500-4-1.500z" fill="#000" fill-opacity=".12"/><path d="M14 .5l5.500 2.700L14 6z" fill="#333"/></svg>
<span class="t" style="top:63.5px;font-size:14px;line-height:20px;color:#111;left:279.5px;width:400px;text-align:center;">运行此算例</span>
<svg style="left:476.5px;top:104.5px;" width="6" height="3.5" viewBox="0 0 6 3.5"><path d="M0 0H6L3 3Z" fill="#444"/></svg>
<div style="left:521.5px;top:39px;width:1px;height:78px;background:#cfcfcf;"></div>
<svg style="left:545.5px;top:44.0px;" width="20" height="20" viewBox="0 0 20 20"><defs><linearGradient id="rb" x1="0" y1="0" x2="1" y2="1"><stop offset="0" stop-color="#f22"/><stop offset=".3" stop-color="#fc0"/><stop offset=".55" stop-color="#3c3"/><stop offset=".8" stop-color="#2bd"/><stop offset="1" stop-color="#24d"/></linearGradient></defs><path d="M6.500 1h8l4 4v13h-12z" fill="#fff" stroke="#777" stroke-width="1"/><path d="M9 5h2M9 8h2M9 11h2M12.500 5h3M12.500 8h3" stroke="#555" stroke-width="1.200"/><path d="M.5 11.500l4-1v4l5 1v4h-9z" fill="url(#rb)" stroke="#a22" stroke-width=".6"/><circle cx="15.500" cy="11" r="2.400" fill="#2a5a8a"/><path d="M11.500 19v-2.500c0-2 1.500-3 4-3s4 1 4 3v2.500z" fill="#2a5a8a"/></svg>
<span class="t" style="top:63.5px;font-size:14px;line-height:20px;color:#111;left:355.5px;width:400px;text-align:center;">结果顾问</span>
<svg style="left:552.5px;top:104.5px;" width="6" height="3.5" viewBox="0 0 6 3.5"><path d="M0 0H6L3 3Z" fill="#444"/></svg>
<div style="left:589px;top:39px;width:52px;height:78px;background:#b4b4b4;border:1px solid #8e8e8e;box-sizing:border-box;"></div>
<svg style="left:605.0px;top:55.0px;" width="20" height="10" viewBox="0 0 20 10"><defs><linearGradient id="df" x1="0" x2="1"><stop offset="0" stop-color="#e22"/><stop offset=".35" stop-color="#fc0"/><stop offset=".65" stop-color="#3c3"/><stop offset="1" stop-color="#26c"/></linearGradient></defs><path d="M8 1h11v6h-5z" fill="#fff" stroke="#555" stroke-width=".8"/><path d="M1 1h7c4 0 7 2 8.500 4l-2.500 4c-1-2.500-3-3.500-6-3.500h-7z" fill="url(#df)" stroke="#444" stroke-width=".6"/></svg>
<span class="t" style="top:71.5px;font-size:14px;line-height:20px;color:#111;left:415px;width:400px;text-align:center;">变形结</span>
<span class="t" style="top:89.5px;font-size:14px;line-height:20px;color:#111;left:415px;width:400px;text-align:center;">果</span>
<svg style="left:656.0px;top:50.0px;" width="22" height="20" viewBox="0 0 22 20"><path d="M1.500 1h7l2.500 2.500v9h-9.500z" fill="#fff" stroke="#666"/><rect x="3" y="5" width="5" height="6" fill="#3c3"/><rect x="3" y="5" width="5" height="2" fill="#e22"/><rect x="3" y="9" width="5" height="2" fill="#24d"/><path d="M11.500 7h7l2.500 2.500v9h-9.500z" fill="#fff" stroke="#666"/><rect x="15" y="11" width="4.500" height="6" fill="#3c3"/><rect x="15" y="11" width="4.500" height="2" fill="#e22"/><rect x="15" y="15" width="4.500" height="2" fill="#24d"/><path d="M2 15h5M2 17.500h5" stroke="#222" stroke-width="1.300"/></svg><span class="t" style="top:53.0px;font-size:13px;line-height:18px;color:#2a7ab0;font-weight:bold;left:466px;width:400px;text-align:center;">?</span>
<span class="t" style="top:71.5px;font-size:14px;line-height:20px;color:#111;left:467px;width:400px;text-align:center;">比较结</span>
<span class="t" style="top:89.5px;font-size:14px;line-height:20px;color:#111;left:467px;width:400px;text-align:center;">果</span>
<svg style="left:695.0px;top:43.0px;" width="20" height="18" viewBox="0 0 20 18"><path d="M6 3l8-2 5 4v7l-7 4-6-2z" fill="#eee" stroke="#555" stroke-width="1"/><path d="M6 3l6 3 7-1M12 6v10" fill="none" stroke="#555" stroke-width=".8"/><rect x="7" y="2" width="6" height="3" fill="#5a9ac8"/><circle cx="7" cy="10" r="4.300" fill="#cfe6f6" fill-opacity=".85" stroke="#333" stroke-width="1.300"/><path d="M4 13.500L.8 17" stroke="#222" stroke-width="2"/></svg>
<span class="t" style="top:42.0px;font-size:14px;line-height:20px;color:#111;left:721.5px;">设计洞察</span>
<svg style="left:695.0px;top:68.0px;" width="20" height="20" viewBox="0 0 20 20"><g stroke="#333" stroke-width=".5"><path d="M1 3l6-2v14l-6 2z" fill="#3c3"/><path d="M1 3l6-2v4l-6 2z" fill="#e22"/><path d="M1 7l6-2v3l-6 2z" fill="#fc0"/><path d="M1 13l6-2v4l-6 2z" fill="#24d"/><path d="M8 3l6-2v14l-6 2z" fill="#3c3"/><path d="M8 3l6-2v4l-6 2z" fill="#e22"/><path d="M8 7l6-2v3l-6 2z" fill="#fc0"/><path d="M8 13l6-2v4l-6 2z" fill="#24d"/></g><path d="M18.500 8l-7 8-2 3 3.500-1.500 7-8z" fill="#4a6a8a" stroke="#223" stroke-width=".8"/></svg>
<span class="t" style="top:68.0px;font-size:14px;line-height:20px;color:#111;left:721.5px;">图解工具</span>
<svg style="left:790.5px;top:75.5px;" width="6" height="3.5" viewBox="0 0 6 3.5"><path d="M0 0H6L3 3Z" fill="#444"/></svg>
<div style="left:802px;top:39px;width:1px;height:78px;background:#cfcfcf;"></div>
<svg style="left:807.0px;top:42.0px;" width="18" height="20" viewBox="0 0 18 20"><rect x="2.500" y="1" width="14" height="18" rx="2" fill="#fff" stroke="#222" stroke-width="1.300"/><path d="M5.500 5h8M5.500 7.500h8M5.500 10h8M5.500 12.500h8M5.500 15h8" stroke="#333" stroke-width="1"/><path d="M.5 4h3M.5 7h3M.5 10h3M.5 13h3M.5 16h3" stroke="#222" stroke-width="1.200"/><path d="M16 4h2M16 7h2M16 10h2M16 13h2M16 16h2" stroke="#2a7ab0" stroke-width="1.400"/></svg>
<span class="t" style="top:42.0px;font-size:14px;line-height:20px;color:#111;left:832px;">报表</span>
<svg style="left:806.0px;top:68.0px;" width="20" height="20" viewBox="0 0 20 20"><defs><linearGradient id="rb" x1="0" y1="0" x2="1" y2="1"><stop offset="0" stop-color="#f22"/><stop offset=".3" stop-color="#fc0"/><stop offset=".55" stop-color="#3c3"/><stop offset=".8" stop-color="#2bd"/><stop offset="1" stop-color="#24d"/></linearGradient></defs><path d="M1 5l6-2 1 6 10 1v5l-8 4.500L1 14z" fill="url(#rb)" stroke="#333" stroke-width=".8"/><path d="M10 19.500v-6l8-3.500" fill="none" stroke="#222" stroke-width=".8"/><path d="M10 13.500L4 11" stroke="#222" stroke-width=".8"/><rect x="7.500" y="2.500" width="12" height="8.500" rx="1" fill="#f4f4f4" stroke="#444" stroke-width="1"/><rect x="10.500" y="1" width="4" height="2" fill="#ddd" stroke="#444" stroke-width=".8"/><circle cx="13.500" cy="6.800" r="2.600" fill="#fff" stroke="#444" stroke-width="1.100"/><circle cx="13.500" cy="6.800" r="1" fill="#444"/></svg>
<span class="t" style="top:68.0px;font-size:14px;line-height:20px;color:#111;left:832px;">为报表包括图像</span>
<div style="left:941px;top:39px;width:1px;height:78px;background:#cfcfcf;"></div>
<svg style="left:945.0px;top:43.0px;" width="20" height="18" viewBox="0 0 20 18"><g fill="#e2e2e2" stroke="#cfcfcf" stroke-width=".8"><path d="M1 5h3l1 1h3v6h-7z"/><path d="M12 5h3l1 1h3v6h-7z"/></g><path d="M6 3h8m-2.500-2.500l2.500 2.500-2.500 2.500M14 15.500h-8m2.500-2.500l-2.500 2.500 2.500 2.500" fill="none" stroke="#c4c4c4" stroke-width="1.200"/></svg>
<span class="t" style="top:42.0px;font-size:14px;line-height:20px;color:#bdbdbd;left:971.5px;">已卸载的模拟</span>
<svg style="left:945.0px;top:68.0px;" width="20" height="20" viewBox="0 0 20 20"><g fill="#ececec" stroke="#d0d0d0" stroke-width=".9"><rect x="5.500" y=".5" width="5" height="5"/><rect x="8" y="6" width="11" height="13"/><rect x="1" y="12" width="6" height="7"/></g><path d="M8 10h11M8 14h11M12 6v13" stroke="#d0d0d0" stroke-width=".8"/></svg>
<span class="t" style="top:68.0px;font-size:14px;line-height:20px;color:#bdbdbd;left:971.5px;">管理网络</span>
<div style="left:0px;top:120px;width:67.5px;height:28px;background:#d0d0d0;border:1px solid #a6a6a6;border-top:none;box-sizing:border-box;"></div>
<span class="t" style="top:123.0px;font-size:16px;line-height:22px;color:#2a2a2a;left:-167px;width:400px;text-align:center;">装配体</span>
<div style="left:67px;top:120px;width:55.5px;height:28px;background:#d0d0d0;border:1px solid #a6a6a6;border-top:none;box-sizing:border-box;"></div>
<span class="t" style="top:123.0px;font-size:16px;line-height:22px;color:#2a2a2a;left:-105px;width:400px;text-align:center;">布局</span>
<div style="left:123px;top:120px;width:55.5px;height:28px;background:#d0d0d0;border:1px solid #a6a6a6;border-top:none;box-sizing:border-box;"></div>
<span class="t" style="top:123.0px;font-size:16px;line-height:22px;color:#2a2a2a;left:-49px;width:400px;text-align:center;">草图</span>
<div style="left:179px;top:120px;width:55.5px;height:28px;background:#d0d0d0;border:1px solid #a6a6a6;border-top:none;box-sizing:border-box;"></div>
<span class="t" style="top:123.0px;font-size:16px;line-height:22px;color:#2a2a2a;left:7px;width:400px;text-align:center;">评估</span>
<div style="left:325.5px;top:120px;width:55.5px;height:28px;background:#d0d0d0;border:1px solid #a6a6a6;border-top:none;box-sizing:border-box;"></div>
<span class="t" style="top:123.0px;font-size:16px;line-height:22px;color:#2a2a2a;left:153.5px;width:400px;text-align:center;">MBD</span>
<div style="left:381px;top:120px;width:69px;height:28px;background:#d0d0d0;border:1px solid #a6a6a6;border-top:none;box-sizing:border-box;"></div>
<span class="t" style="top:123.0px;font-size:16px;line-height:22px;color:#2a2a2a;left:215.5px;width:400px;text-align:center;">曲面(E)</span>
<span class="t" style="top:123.0px;font-size:15.5px;line-height:22px;color:#444;left:80px;width:400px;text-align:center;">Simulation</span>
<!-- left -->
<div style="left:0px;top:148px;width:229px;height:839px;background:#f8f8f8;"></div>
<div style="left:229px;top:148px;width:1px;height:839px;background:#f0f0f0;"></div>
<div style="left:230px;top:148px;width:1px;height:839px;background:#a0a0a0;"></div>
<div style="left:0px;top:149px;width:228px;height:1.5px;background:#b8cfd8;"></div>
<div style="left:0px;top:152px;width:228px;height:1px;background:#e2e2e2;"></div>
<svg style="left:110px;top:159px;" width="8" height="8" viewBox="0 0 8 8"><circle cx="4" cy="4" r="2.600" fill="#eee" stroke="#aaa" stroke-width="1"/></svg>
<div style="left:0px;top:173px;width:228px;height:1px;background:#d8d8d8;"></div>
<div style="left:39.5px;top:178px;width:40.5px;height:25.5px;background:#d2d2d2;border:1px solid #a8a8a8;box-sizing:border-box;"></div>
<div style="left:79.5px;top:178px;width:40.5px;height:25.5px;background:#d2d2d2;border:1px solid #a8a8a8;box-sizing:border-box;"></div>
<div style="left:119.5px;top:178px;width:40.5px;height:25.5px;background:#d2d2d2;border:1px solid #a8a8a8;box-sizing:border-box;"></div>
<div style="left:159.5px;top:178px;width:40.5px;height:25.5px;background:#d2d2d2;border:1px solid #a8a8a8;box-sizing:border-box;"></div>
<div style="left:0px;top:203px;width:228px;height:1px;background:#d0d0d0;"></div>
<svg style="left:11.5px;top:181.5px;" width="19" height="19" viewBox="70 218 114 114"><path d="M75 265L100 240L122 250V288L150 300L178 290V305L130 328L75 300Z" fill="#f4c634" stroke="#7a5a00" stroke-width="5" stroke-linejoin="round"/><path d="M75 265L97 278L122 262M97 278V312M130 328V296" fill="none" stroke="#7a5a00" stroke-width="4"/><path d="M97 278L122 262V288L130 296V328L97 312Z" fill="#d8a410"/><path d="M120 240L148 225L178 240V290L150 300L120 288Z" fill="#7cc8ec" stroke="#1d5a86" stroke-width="5" stroke-linejoin="round"/><path d="M120 240L150 255L178 240M150 255V300" fill="none" stroke="#1d5a86" stroke-width="4"/><path d="M150 255L178 240V290L150 300Z" fill="#4a9ed0"/></svg>
<svg style="left:51.0px;top:182.5px;" width="18" height="17" viewBox="0 0 18 17"><rect x=".8" y=".8" width="16.400" height="15.400" rx="1" fill="#fff" stroke="#234" stroke-width="1.200"/><rect x=".8" y=".8" width="16.400" height="3" fill="#3a8ac8" stroke="#234" stroke-width="1"/><g fill="#3a8ac8"><rect x="3" y="6" width="3.500" height="2"/><rect x="3" y="9.300" width="3.500" height="2"/><rect x="3" y="12.600" width="3.500" height="2"/></g><path d="M8 7h7M8 10.300h7M8 13.600h7" stroke="#234" stroke-width="1"/></svg>
<svg style="left:92.0px;top:182.0px;" width="16" height="18" viewBox="0 0 16 18"><path d="M3 1v16M3 4h4M3 14h4" fill="none" stroke="#333" stroke-width="1.300"/><rect x="1" y=".8" width="4" height="3" fill="#fff" stroke="#333"/><rect x="7" y="2" width="5.500" height="4.500" fill="#fff" stroke="#333" stroke-width="1.100"/><rect x="8.500" y="11.500" width="5.500" height="4.500" fill="#fff" stroke="#333" stroke-width="1.100"/><path d="M10 6.500v3h2v2" fill="none" stroke="#333"/></svg>
<svg style="left:131.0px;top:182.0px;" width="18" height="18" viewBox="0 0 18 18"><circle cx="9" cy="9" r="5.600" fill="none" stroke="#111" stroke-width="1.700"/><path d="M9 0v18M0 9h18" stroke="#111" stroke-width="1.700"/></svg>
<svg style="left:170.0px;top:180.0px;" width="20" height="20" viewBox="0 0 20 20"><defs><clipPath id="ap"><circle cx="10" cy="10" r="9"/></clipPath><radialGradient id="apg" cx=".4" cy=".3"><stop offset="0" stop-color="#fff" stop-opacity=".7"/><stop offset=".5" stop-color="#fff" stop-opacity="0"/></radialGradient></defs><g clip-path="url(#ap)"><rect width="20" height="20" fill="#e22"/><path d="M10 10L0 6v14h6z" fill="#24d"/><path d="M10 10L6 20h8z" fill="#2b2"/><path d="M10 10l4 10h6v-8z" fill="#fc0"/><ellipse cx="13.500" cy="6.500" rx="2.800" ry="4.800" transform="rotate(-35 13.500 6.500)" fill="#111"/><circle cx="10" cy="10" r="9" fill="url(#apg)"/></g><circle cx="10" cy="10" r="9" fill="none" stroke="#777" stroke-width=".8"/></svg>
<svg style="left:211px;top:182px;" width="16" height="16" viewBox="-8 -8 16 16"><path d="M-2.5 -5L2.5 0L-2.5 5" fill="none" stroke="#888" stroke-width="1.6"/></svg>
<div style="left:3px;top:204.5px;width:224px;height:31px;background:#f8f8f8;border:1px solid #dcdcdc;box-sizing:border-box;"></div>
<svg style="left:5.0px;top:211.0px;" width="20" height="20" viewBox="0 0 20 20"><path d="M1 3.500h16l-6 7v7l-4 1.500v-8.500z" fill="#fff" stroke="#333" stroke-width="1.100"/><ellipse cx="9" cy="3" rx="8" ry="1.800" fill="#4aa6dc" stroke="#1d6f9a" stroke-width="1"/></svg>
<svg style="left:24.0px;top:222.75px;" width="5.0" height="3.0" viewBox="0 0 5.0 3.0"><path d="M0 0H5.0L2.5 2.5Z" fill="#444"/></svg>
<div style="left:0px;top:236px;width:211px;height:121px;background:#fbfbfb;"></div>
<svg style="left:6.5px;top:238.5px;" width="15" height="15" viewBox="70 218 114 114"><path d="M75 265L100 240L122 250V288L150 300L178 290V305L130 328L75 300Z" fill="#f4c634" stroke="#7a5a00" stroke-width="5" stroke-linejoin="round"/><path d="M75 265L97 278L122 262M97 278V312M130 328V296" fill="none" stroke="#7a5a00" stroke-width="4"/><path d="M97 278L122 262V288L130 296V328L97 312Z" fill="#d8a410"/><path d="M120 240L148 225L178 240V290L150 300L120 288Z" fill="#7cc8ec" stroke="#1d5a86" stroke-width="5" stroke-linejoin="round"/><path d="M120 240L150 255L178 240M150 255V300" fill="none" stroke="#1d5a86" stroke-width="4"/><path d="M150 255L178 240V290L150 300Z" fill="#4a9ed0"/></svg><svg style="left:1.0999999999999996px;top:242.58px;" width="8.8" height="15.84" viewBox="0 0 10 18"><rect x=".5" y=".5" width="9" height="17" rx="4.500" fill="#222"/><circle cx="5" cy="5" r="2.600" fill="#e22"/><circle cx="5" cy="13" r="2.600" fill="#2a2"/><circle cx="4.300" cy="4.300" r=".9" fill="#fbb"/><circle cx="4.300" cy="12.300" r=".9" fill="#bfb"/></svg>
<span class="t" style="top:238.0px;font-size:16px;line-height:22px;color:#111;letter-spacing:0.02px;left:25px;width:186px;overflow:hidden;white-space:nowrap;">suspension&nbsp;&nbsp;(Default&lt;Defa</span>
<svg style="left:25.0px;top:264.5px;" width="18" height="17" viewBox="0 0 18 17"><path d="M1 16V2.500c0-1 .5-1.500 1.500-1.500h4l1.500 2h8.500c.5 0 1 .5 1 1v12z" fill="#fdfdfd" stroke="#444" stroke-width="1.100"/><path d="M1 5.500h16.500" stroke="#444" stroke-width=".9"/><circle cx="10" cy="11" r="3.800" fill="#fff" stroke="#333" stroke-width=".9"/><path d="M10 8.500v2.500l2 1" fill="none" stroke="#333" stroke-width=".9"/><path d="M3.500 9.500c1.500 3 3 3.500 5 3.500l-.5-2" fill="none" stroke="#2a7ab0" stroke-width="1.400"/></svg>
<span class="t" style="top:262.0px;font-size:16px;line-height:22px;color:#111;letter-spacing:0.4px;left:48px;">History</span>
<svg style="left:25.0px;top:288.5px;" width="18" height="17" viewBox="0 0 18 17"><path d="M1 16V2.500c0-1 .5-1.500 1.500-1.500h4l1.500 2h8.500c.5 0 1 .5 1 1v12z" fill="#fdfdfd" stroke="#444" stroke-width="1.100"/><path d="M1 5.500h16.500" stroke="#444" stroke-width=".9"/><circle cx="10" cy="11" r="3.900" fill="#fff" stroke="#333" stroke-width=".9"/><path d="M10 11l2.500-2.800" stroke="#e22" stroke-width="1.400"/><path d="M7.500 9l1 1" stroke="#2a7ab0" stroke-width="1"/></svg>
<span class="t" style="top:286.0px;font-size:16px;line-height:22px;color:#111;letter-spacing:-0.25px;left:48px;">Sensors</span>
<svg style="left:7.355px;top:315.4px;" width="5.789999999999999" height="9.2" viewBox="0 0 5.789999999999999 9.2"><path d="M0 0V9.2L5.289999999999999 4.6Z" fill="#5a5a5a"/></svg>
<svg style="left:25.0px;top:312.5px;" width="18" height="17" viewBox="0 0 18 17"><path d="M1 16V2.500c0-1 .5-1.500 1.500-1.500h4l1.500 2h8.500c.5 0 1 .5 1 1v12z" fill="#fdfdfd" stroke="#444" stroke-width="1.100"/><path d="M1 5.500h16.500" stroke="#444" stroke-width=".9"/></svg><span class="t" style="top:315.0px;font-size:12px;line-height:17px;color:#2a6aa0;font-weight:bold;left:-165px;width:400px;text-align:center;font-family:"Liberation Serif",serif;">A</span>
<span class="t" style="top:310.0px;font-size:16px;line-height:22px;color:#111;letter-spacing:0.45px;left:48px;">Annotations</span>
<svg style="left:26.0px;top:334.0px;" width="16" height="20" viewBox="0 0 16 20"><path d="M3 4l10-2.500v14L3 18z" fill="#fff" stroke="#555" stroke-width="1"/><path d="M8 0v4M8 7v3M8 13v3M8 18v2" stroke="#333" stroke-width="1"/></svg>
<span class="t" style="top:334.0px;font-size:16px;line-height:22px;color:#111;letter-spacing:0.4px;left:48px;">Front</span>
<div style="left:211px;top:236px;width:17px;height:121px;background:#f0f0f0;"></div>
<div style="left:211px;top:257.5px;width:17px;height:20px;background:#cdcdcd;"></div>
<svg style="left:212px;top:239px;" width="16" height="16" viewBox="-8 -8 16 16"><path d="M-4.5 2.25L0 -2.25L4.5 2.25" fill="none" stroke="#555" stroke-width="1.8"/></svg>
<svg style="left:212px;top:338px;" width="16" height="16" viewBox="-8 -8 16 16"><path d="M-4.5 -2.25L0 2.25L4.5 -2.25" fill="none" stroke="#555" stroke-width="1.8"/></svg>
<div style="left:0px;top:357px;width:211px;height:20px;background:#f0f0f0;"></div>
<div style="left:20px;top:357px;width:56px;height:20px;background:#cdcdcd;"></div>
<svg style="left:1px;top:359px;" width="16" height="16" viewBox="-8 -8 16 16"><path d="M2.25 -4.5L-2.25 0L2.25 4.5" fill="none" stroke="#555" stroke-width="1.8"/></svg>
<svg style="left:191px;top:359px;" width="16" height="16" viewBox="-8 -8 16 16"><path d="M-2.25 -4.5L2.25 0L-2.25 4.5" fill="none" stroke="#555" stroke-width="1.8"/></svg>
<div style="left:211px;top:357px;width:17px;height:20px;background:#f0f0f0;"></div>
<div style="left:0px;top:379.5px;width:228px;height:2px;background:#c4c4c4;"></div>
<svg style="left:110px;top:385px;" width="8" height="8" viewBox="0 0 8 8"><circle cx="4" cy="4" r="2.600" fill="#eee" stroke="#aaa" stroke-width="1"/></svg>
<div style="left:0px;top:396.5px;width:228px;height:1px;background:#dcdcdc;"></div>
<div style="left:3px;top:397.5px;width:223px;height:31px;background:#f8f8f8;border:1px solid #dcdcdc;box-sizing:border-box;"></div>
<svg style="left:5.0px;top:404.0px;" width="20" height="20" viewBox="0 0 20 20"><path d="M1 3.500h16l-6 7v7l-4 1.500v-8.500z" fill="#fff" stroke="#333" stroke-width="1.100"/><ellipse cx="9" cy="3" rx="8" ry="1.800" fill="#4aa6dc" stroke="#1d6f9a" stroke-width="1"/></svg>
<svg style="left:24.0px;top:415.75px;" width="5.0" height="3.0" viewBox="0 0 5.0 3.0"><path d="M0 0H5.0L2.5 2.5Z" fill="#444"/></svg>
<div style="left:0px;top:429px;width:210px;height:557px;background:#fbfbfb;"></div>
<svg style="left:28.855px;top:436.9px;" width="5.789999999999999" height="9.2" viewBox="0 0 5.789999999999999 9.2"><path d="M0 0V9.2L5.289999999999999 4.6Z" fill="#5a5a5a"/></svg>
<svg style="left:47.8px;top:432.5px;" width="18" height="18" viewBox="0 0 18 18"><path d="M.3 3.700L9.500 1.500 16 5.500 8.500 8.500z" fill="#d8f0d0" stroke="#444" stroke-width=".8"/><path d="M.3 3.700L8.500 8.500v9.300L.5 12z" fill="#8ad07a" stroke="#444" stroke-width=".9"/><path d="M8.500 8.500L16 5.500v8l-7.500 4.300z" fill="#fff" stroke="#444" stroke-width=".9"/><path d="M3 5.300v8.500M5.800 7v9M.4 6.500l8.100 4.800M.4 9.300l8.100 5" stroke="#2a8a1a" stroke-width=".8"/><path d="M10.300 8v9M12.200 7.200v9M14.100 6.500v8.500" stroke="#38b028" stroke-width="1" stroke-dasharray="1.600 .8"/><path d="M6.800 5.300l3.600 2.400L17.800.5" fill="none" stroke="#0a7a0a" stroke-width="2.700"/></svg>
<svg style="left:70.6px;top:433.5px;" width="18" height="18" viewBox="0 0 18 18"><path d="M9.500 .3C8 5 5 9.500 .6 12.300L11.700 17.800 17.500 12.600C14.500 9 12 5 11 1z" fill="#3ad2dc" stroke="#1a6a80" stroke-width=".9" stroke-linejoin="round"/><path d="M9.500 .3C10 6 10.500 12 11.700 17.800L17.500 12.600C14.500 9 12 5 11 1z" fill="#8ceef4" stroke="#1a6a80" stroke-width=".8" stroke-linejoin="round"/></svg>
<span class="t" style="top:430.5px;font-size:16px;line-height:22px;color:#111;left:94px;width:115px;overflow:hidden;white-space:nowrap;"><span style="font-size:15px;letter-spacing:0.3px">arm-1 (-</span>合金钢<span style="font-size:15px;letter-spacing:0.3px">-)</span></span>
<svg style="left:28.855px;top:460.9px;" width="5.789999999999999" height="9.2" viewBox="0 0 5.789999999999999 9.2"><path d="M0 0V9.2L5.289999999999999 4.6Z" fill="#5a5a5a"/></svg>
<svg style="left:47.8px;top:456.5px;" width="18" height="18" viewBox="0 0 18 18"><path d="M.3 3.700L9.500 1.500 16 5.500 8.500 8.500z" fill="#d8f0d0" stroke="#444" stroke-width=".8"/><path d="M.3 3.700L8.500 8.500v9.300L.5 12z" fill="#8ad07a" stroke="#444" stroke-width=".9"/><path d="M8.500 8.500L16 5.500v8l-7.500 4.300z" fill="#fff" stroke="#444" stroke-width=".9"/><path d="M3 5.300v8.500M5.800 7v9M.4 6.500l8.100 4.800M.4 9.300l8.100 5" stroke="#2a8a1a" stroke-width=".8"/><path d="M10.300 8v9M12.200 7.200v9M14.100 6.500v8.500" stroke="#38b028" stroke-width="1" stroke-dasharray="1.600 .8"/><path d="M6.800 5.300l3.600 2.400L17.800.5" fill="none" stroke="#0a7a0a" stroke-width="2.700"/></svg>
<svg style="left:70.6px;top:457.5px;" width="18" height="18" viewBox="0 0 18 18"><path d="M9.500 .3C8 5 5 9.500 .6 12.300L11.700 17.800 17.500 12.600C14.500 9 12 5 11 1z" fill="#3ad2dc" stroke="#1a6a80" stroke-width=".9" stroke-linejoin="round"/><path d="M9.500 .3C10 6 10.500 12 11.700 17.800L17.500 12.600C14.500 9 12 5 11 1z" fill="#8ceef4" stroke="#1a6a80" stroke-width=".8" stroke-linejoin="round"/></svg>
<span class="t" style="top:454.5px;font-size:16px;line-height:22px;color:#111;left:94px;width:115px;overflow:hidden;white-space:nowrap;"><span style="font-size:15px;letter-spacing:-0.25px">shock-1/Front Shock</span></span>
<svg style="left:28.855px;top:484.9px;" width="5.789999999999999" height="9.2" viewBox="0 0 5.789999999999999 9.2"><path d="M0 0V9.2L5.289999999999999 4.6Z" fill="#5a5a5a"/></svg>
<svg style="left:47.8px;top:480.5px;" width="18" height="18" viewBox="0 0 18 18"><path d="M.3 3.700L9.500 1.500 16 5.500 8.500 8.500z" fill="#d8f0d0" stroke="#444" stroke-width=".8"/><path d="M.3 3.700L8.500 8.500v9.300L.5 12z" fill="#8ad07a" stroke="#444" stroke-width=".9"/><path d="M8.500 8.500L16 5.500v8l-7.500 4.300z" fill="#fff" stroke="#444" stroke-width=".9"/><path d="M3 5.300v8.500M5.800 7v9M.4 6.500l8.100 4.800M.4 9.300l8.100 5" stroke="#2a8a1a" stroke-width=".8"/><path d="M10.300 8v9M12.200 7.200v9M14.100 6.500v8.500" stroke="#38b028" stroke-width="1" stroke-dasharray="1.600 .8"/><path d="M6.800 5.300l3.600 2.400L17.800.5" fill="none" stroke="#0a7a0a" stroke-width="2.700"/></svg>
<svg style="left:70.6px;top:481.5px;" width="18" height="18" viewBox="0 0 18 18"><path d="M9.500 .3C8 5 5 9.500 .6 12.300L11.700 17.800 17.500 12.600C14.500 9 12 5 11 1z" fill="#3ad2dc" stroke="#1a6a80" stroke-width=".9" stroke-linejoin="round"/><path d="M9.500 .3C10 6 10.500 12 11.700 17.800L17.500 12.600C14.500 9 12 5 11 1z" fill="#8ceef4" stroke="#1a6a80" stroke-width=".8" stroke-linejoin="round"/></svg>
<span class="t" style="top:478.5px;font-size:16px;line-height:22px;color:#111;left:94px;width:115px;overflow:hidden;white-space:nowrap;"><span style="font-size:15px;letter-spacing:-0.25px">shock-1/Shock Plunger</span></span>
<svg style="left:28.855px;top:508.9px;" width="5.789999999999999" height="9.2" viewBox="0 0 5.789999999999999 9.2"><path d="M0 0V9.2L5.289999999999999 4.6Z" fill="#5a5a5a"/></svg>
<svg style="left:47.8px;top:504.5px;" width="18" height="18" viewBox="0 0 18 18"><path d="M.3 3.700L9.500 1.500 16 5.500 8.500 8.500z" fill="#d8f0d0" stroke="#444" stroke-width=".8"/><path d="M.3 3.700L8.500 8.500v9.300L.5 12z" fill="#8ad07a" stroke="#444" stroke-width=".9"/><path d="M8.500 8.500L16 5.500v8l-7.500 4.300z" fill="#fff" stroke="#444" stroke-width=".9"/><path d="M3 5.300v8.500M5.800 7v9M.4 6.500l8.100 4.800M.4 9.300l8.100 5" stroke="#2a8a1a" stroke-width=".8"/><path d="M10.300 8v9M12.200 7.200v9M14.100 6.500v8.500" stroke="#38b028" stroke-width="1" stroke-dasharray="1.600 .8"/><path d="M6.800 5.300l3.600 2.400L17.800.5" fill="none" stroke="#0a7a0a" stroke-width="2.700"/></svg>
<svg style="left:70.6px;top:505.5px;" width="18" height="18" viewBox="0 0 18 18"><path d="M9.500 .3C8 5 5 9.500 .6 12.300L11.700 17.800 17.500 12.600C14.500 9 12 5 11 1z" fill="#3ad2dc" stroke="#1a6a80" stroke-width=".9" stroke-linejoin="round"/><path d="M9.500 .3C10 6 10.500 12 11.700 17.800L17.500 12.600C14.500 9 12 5 11 1z" fill="#8ceef4" stroke="#1a6a80" stroke-width=".8" stroke-linejoin="round"/></svg>
<span class="t" style="top:502.5px;font-size:16px;line-height:22px;color:#111;left:94px;width:115px;overflow:hidden;white-space:nowrap;"><span style="font-size:15px;letter-spacing:-0.25px">shock-1/Shock Tube</span></span>
<svg style="left:28.855px;top:532.9px;" width="5.789999999999999" height="9.2" viewBox="0 0 5.789999999999999 9.2"><path d="M0 0V9.2L5.289999999999999 4.6Z" fill="#5a5a5a"/></svg>
<svg style="left:47.8px;top:528.5px;" width="18" height="18" viewBox="0 0 18 18"><path d="M.3 3.700L9.500 1.500 16 5.500 8.500 8.500z" fill="#d8f0d0" stroke="#444" stroke-width=".8"/><path d="M.3 3.700L8.500 8.500v9.300L.5 12z" fill="#8ad07a" stroke="#444" stroke-width=".9"/><path d="M8.500 8.500L16 5.500v8l-7.500 4.300z" fill="#fff" stroke="#444" stroke-width=".9"/><path d="M3 5.300v8.500M5.800 7v9M.4 6.500l8.100 4.800M.4 9.300l8.100 5" stroke="#2a8a1a" stroke-width=".8"/><path d="M10.300 8v9M12.200 7.200v9M14.100 6.500v8.500" stroke="#38b028" stroke-width="1" stroke-dasharray="1.600 .8"/><path d="M6.800 5.300l3.600 2.400L17.800.5" fill="none" stroke="#0a7a0a" stroke-width="2.700"/></svg>
<svg style="left:70.6px;top:529.5px;" width="18" height="18" viewBox="0 0 18 18"><path d="M9.500 .3C8 5 5 9.500 .6 12.300L11.700 17.800 17.500 12.600C14.500 9 12 5 11 1z" fill="#3ad2dc" stroke="#1a6a80" stroke-width=".9" stroke-linejoin="round"/><path d="M9.500 .3C10 6 10.500 12 11.700 17.800L17.500 12.600C14.500 9 12 5 11 1z" fill="#8ceef4" stroke="#1a6a80" stroke-width=".8" stroke-linejoin="round"/></svg>
<span class="t" style="top:526.5px;font-size:16px;line-height:22px;color:#111;left:94px;width:115px;overflow:hidden;white-space:nowrap;"><span style="font-size:15px;letter-spacing:0.3px">upper arm-1 (-</span>合金钢<span style="font-size:15px;letter-spacing:0.3px">-)</span></span>
<svg style="left:4.5px;top:559.0px;" width="9" height="5.5" viewBox="0 0 9 5.5"><path d="M0 0h9L4.5 5z" fill="#555"/></svg>
<svg style="left:23.5px;top:552.5px;" width="19" height="18" viewBox="0 0 19 18"><path d="M.8 4.500c0-2.200 2-3.500 5.700-3.500s5.700 1.300 5.700 3.500v2.500h-11.400z" fill="#d4d4d4" stroke="#444" stroke-width="1.100"/><path d="M4.500 1.200v5.500M8.500 1.200v5.500" stroke="#666" stroke-width=".8"/><path d="M3.500 7h6v8.500l-3 1.800-3-1.800z" fill="#e4e4e4" stroke="#444" stroke-width="1.100"/><path d="M3.500 9.500h6M3.500 12h6M3.500 14.500h6" stroke="#444" stroke-width=".9"/><path d="M14.500 .5l3 1-3 1 3 1-3 1 3 1-3 1 3 1-3 1 3 1-3 1 3 1-3 1 3 1-3 1 3 1-3 1" fill="none" stroke="#2a80b8" stroke-width="1"/></svg>
<span class="t" style="top:550.5px;font-size:16px;line-height:22px;color:#111;left:47px;">连结</span>
<svg style="left:28.855px;top:580.9px;" width="5.789999999999999" height="9.2" viewBox="0 0 5.789999999999999 9.2"><path d="M0 0V9.2L5.289999999999999 4.6Z" fill="#5a5a5a"/></svg>
<svg style="left:48.0px;top:576.5px;" width="18" height="18" viewBox="0 0 18 18"><path d="M1 11l6-3 10 2.500-6 4z" fill="#ddd" stroke="#444" stroke-width=".9"/><path d="M1 11v2.500l10 3.500 6-4V10.500" fill="#bbb" stroke="#444" stroke-width=".9"/><path d="M5.500 4l3.500-2 4.500 1v5.500l-4 2-4-1.500z" fill="#3a8ac8" stroke="#1d4f76" stroke-width=".9"/><path d="M5.500 4l4 1 4-2M9.500 5v5.500" fill="none" stroke="#1d4f76" stroke-width=".7"/></svg>
<span class="t" style="top:574.5px;font-size:16px;line-height:22px;color:#111;left:70px;">零部件接触</span>
<svg style="left:26.5px;top:607.0px;" width="9" height="5.5" viewBox="0 0 9 5.5"><path d="M0 0h9L4.5 5z" fill="#555"/></svg>
<svg style="left:47.5px;top:600.5px;" width="19" height="18" viewBox="0 0 19 18"><path d="M.8 4.500c0-2.200 2-3.500 5.700-3.500s5.700 1.300 5.700 3.500v2.500h-11.400z" fill="#d4d4d4" stroke="#444" stroke-width="1.100"/><path d="M4.500 1.200v5.500M8.500 1.200v5.500" stroke="#666" stroke-width=".8"/><path d="M3.500 7h6v8.500l-3 1.800-3-1.800z" fill="#e4e4e4" stroke="#444" stroke-width="1.100"/><path d="M3.500 9.500h6M3.500 12h6M3.500 14.500h6" stroke="#444" stroke-width=".9"/><path d="M14.500 .5l3 1-3 1 3 1-3 1 3 1-3 1 3 1-3 1 3 1-3 1 3 1-3 1 3 1-3 1 3 1-3 1" fill="none" stroke="#2a80b8" stroke-width="1"/></svg>
<span class="t" style="top:598.5px;font-size:16px;line-height:22px;color:#111;left:70px;">接头</span>
<svg style="left:69.5px;top:626.5px;" width="19" height="14" viewBox="0 0 19 14"><path d="M2.500 1.200L15 8.500c1.500 1 2.500 2.500 1.800 3.600s-2.500 1-4-.1L.9 4.500z" fill="#dcdcdc" stroke="#444" stroke-width="1"/><ellipse cx="1.700" cy="2.800" rx="1.200" ry="1.900" transform="rotate(-30 1.700 2.800)" fill="#fff" stroke="#555" stroke-width=".8"/></svg>
<span class="t" style="top:622.5px;font-size:16px;line-height:22px;color:#111;left:93px;width:116px;overflow:hidden;white-space:nowrap;"><span style="font-size:15px;letter-spacing:-0.2px">Pin Connector-1 (:</span></span>
<svg style="left:69.5px;top:650.5px;" width="19" height="14" viewBox="0 0 19 14"><path d="M2.500 1.200L15 8.500c1.500 1 2.500 2.500 1.800 3.600s-2.500 1-4-.1L.9 4.500z" fill="#dcdcdc" stroke="#444" stroke-width="1"/><ellipse cx="1.700" cy="2.800" rx="1.200" ry="1.900" transform="rotate(-30 1.700 2.800)" fill="#fff" stroke="#555" stroke-width=".8"/></svg>
<span class="t" style="top:646.5px;font-size:16px;line-height:22px;color:#111;left:93px;width:116px;overflow:hidden;white-space:nowrap;"><span style="font-size:15px;letter-spacing:-0.2px">Pin Connector-2 (:</span></span>
<svg style="left:69.5px;top:674.5px;" width="19" height="14" viewBox="0 0 19 14"><path d="M2.500 1.200L15 8.500c1.500 1 2.500 2.500 1.800 3.600s-2.500 1-4-.1L.9 4.500z" fill="#dcdcdc" stroke="#444" stroke-width="1"/><ellipse cx="1.700" cy="2.800" rx="1.200" ry="1.900" transform="rotate(-30 1.700 2.800)" fill="#fff" stroke="#555" stroke-width=".8"/></svg>
<span class="t" style="top:670.5px;font-size:16px;line-height:22px;color:#111;left:93px;width:116px;overflow:hidden;white-space:nowrap;"><span style="font-size:15px;letter-spacing:-0.2px">Pin Connector-4 (:</span></span>
<svg style="left:52.855000000000004px;top:700.9px;" width="5.789999999999999" height="9.2" viewBox="0 0 5.789999999999999 9.2"><path d="M0 0V9.2L5.289999999999999 4.6Z" fill="#5a5a5a"/></svg>
<svg style="left:70.0px;top:696.5px;" width="19" height="18" viewBox="0 0 19 18"><path d="M.8 4.500c0-2.200 2-3.500 5.700-3.500s5.700 1.300 5.700 3.500v2.500h-11.400z" fill="#d4d4d4" stroke="#444" stroke-width="1.100"/><path d="M4.500 1.200v5.500M8.500 1.200v5.500" stroke="#666" stroke-width=".8"/><path d="M3.500 7h6v8.500l-3 1.800-3-1.800z" fill="#e4e4e4" stroke="#444" stroke-width="1.100"/><path d="M3.500 9.500h6M3.500 12h6M3.500 14.500h6" stroke="#444" stroke-width=".9"/><path d="M14.500 .5l3 1-3 1 3 1-3 1 3 1-3 1 3 1-3 1 3 1-3 1 3 1-3 1 3 1-3 1 3 1-3 1" fill="none" stroke="#2a80b8" stroke-width="1"/></svg>
<span class="t" style="top:694.5px;font-size:16px;line-height:22px;color:#111;left:93px;"><span style="font-size:15px;letter-spacing:-0.2px">Pin Group-1</span></span>
<svg style="left:71.0px;top:720.5px;" width="14" height="18" viewBox="0 0 14 18"><path d="M12 1.500H4.500c-2.500 0-2.500 3 0 3H10c2.500 0 2.500 3 0 3H4.500c-2.500 0-2.500 3 0 3H10c2.500 0 2.500 3 0 3H4.500c-2.500 0-2.500 3 0 3H12" fill="none" stroke="#444" stroke-width="1.500"/></svg>
<span class="t" style="top:718.5px;font-size:16px;line-height:22px;color:#111;left:93px;width:116px;overflow:hidden;white-space:nowrap;"><span style="font-size:15px;letter-spacing:-0.2px">Spring Connector</span></span>
<svg style="left:4.5px;top:751.0px;" width="9" height="5.5" viewBox="0 0 9 5.5"><path d="M0 0h9L4.5 5z" fill="#555"/></svg>
<svg style="left:23.5px;top:744.5px;" width="19" height="18" viewBox="0 0 19 18"><path d="M6 6l4-4.500 4.500 1.200v3.800l3.500 1v4.500l-5.500 3.500-6.500-2.800z" fill="#ececec" stroke="#5a5a5a" stroke-width="1"/><path d="M6 6l4.500 1.500v3.500l2.500 1v3.500M10.500 7.500l4-1M13 12l4.500-3.500" fill="none" stroke="#7a7a7a" stroke-width=".9"/><path d="M1 11.500l4-1M1.500 14l4-1M3 16.500l4-1" stroke="#4a9acc" stroke-width="1.100"/></svg>
<span class="t" style="top:742.5px;font-size:16px;line-height:22px;color:#111;left:47px;">夹具</span>
<svg style="left:47.0px;top:769.0px;" width="18" height="17" viewBox="0 0 18 17"><rect x=".6" y=".6" width="16.800" height="15.800" fill="#fff" stroke="#333" stroke-width="1.100"/><rect x="7" y="1" width="4" height="15" fill="#3a8ac8" stroke="#1d4f76" stroke-width=".8"/><rect x="11" y="3" width="5.500" height="11" fill="#7ab8e0" stroke="#1d4f76" stroke-width=".8"/><path d="M7 6h4M7 11h4" stroke="#1d4f76"/><g fill="#fff" stroke="#333" stroke-width=".8"><circle cx="3.800" cy="4" r="1.300"/><circle cx="3.800" cy="8.500" r="1.300"/><circle cx="3.800" cy="13" r="1.300"/></g></svg>
<span class="t" style="top:766.5px;font-size:16px;line-height:22px;color:#111;left:70px;">固定铰链-1</span>
<svg style="left:4.5px;top:799.0px;" width="9" height="5.5" viewBox="0 0 9 5.5"><path d="M0 0h9L4.5 5z" fill="#555"/></svg>
<svg style="left:23.5px;top:792.0px;" width="19" height="19" viewBox="0 0 19 19"><path d="M4.500 0v11" stroke="#1d4f76" stroke-width="2.200"/><path d="M.8 9h7.400l-3.700 5.500z" fill="#1d4f76"/><path d="M0 17.500h9.500" stroke="#222" stroke-width="1.500"/><rect x="12.500" y=".5" width="3.400" height="12" rx="1.700" fill="#fff" stroke="#1d4f76" stroke-width="1"/><circle cx="14.200" cy="14.500" r="3.300" fill="#2a7ab0" stroke="#1d4f76" stroke-width="1"/></svg>
<span class="t" style="top:790.5px;font-size:16px;line-height:22px;color:#111;left:47px;">外部载荷</span>
<svg style="left:47.5px;top:816.5px;" width="17" height="18" viewBox="0 0 17 18"><path d="M8.500 0v11" stroke="#1d4f76" stroke-width="2.200"/><path d="M4.500 9h8l-4 6z" fill="#1d4f76"/><path d="M0 17h17" stroke="#222" stroke-width="1.500"/></svg>
<span class="t" style="top:814.5px;font-size:16px;line-height:22px;color:#111;letter-spacing:-0.5px;left:70px;">力-1 (:按条目: 变量:)</span>
<svg style="left:23.5px;top:840.5px;" width="19" height="18" viewBox="0 0 19 18"><path d="M1.500 7l6-3 7.500 2v7.500l-6.500 4-7-3.500z" fill="#ddd" stroke="#444" stroke-width="1"/><path d="M1.500 7l7 3 6.500-4M8.500 10v7.500M5 8.500v7.500M11.700 8v7.500M1.500 9.500l7 3 6.500-4M1.500 12l7 3 6.500-4" fill="none" stroke="#444" stroke-width=".7"/><path d="M7 3.500l3 1.200v4l3-1.700V3l-3-1z" fill="#3a8ac8"/><path d="M9 5l2.500 3 5.500-7" fill="none" stroke="#0a8a0a" stroke-width="2"/></svg>
<span class="t" style="top:838.5px;font-size:16px;line-height:22px;color:#111;left:47px;">网格</span>
<svg style="left:24.0px;top:864.5px;" width="18" height="18" viewBox="0 0 18 18"><rect x=".8" y=".8" width="16.400" height="16.400" rx="1.500" fill="#fff" stroke="#333" stroke-width="1.200"/><circle cx="4.500" cy="4.800" r="1.500" fill="#fff" stroke="#555" stroke-width=".8"/><circle cx="4.500" cy="9" r="1.500" fill="#7ab8e0" stroke="#555" stroke-width=".8"/><circle cx="4.500" cy="13.300" r="1.500" fill="#2a6aa0" stroke="#234" stroke-width=".8"/><path d="M7.500 4.800h7M7.500 9h7M7.500 13.300h7" stroke="#777" stroke-width="1"/></svg>
<span class="t" style="top:862.5px;font-size:16px;line-height:22px;color:#111;left:47px;">结果选项</span>
<svg style="left:4.5px;top:895.0px;" width="9" height="5.5" viewBox="0 0 9 5.5"><path d="M0 0h9L4.5 5z" fill="#555"/></svg>
<svg style="left:24.0px;top:889.0px;" width="18" height="17" viewBox="0 0 18 17"><path d="M1 16V2.500c0-1 .5-1.500 1.500-1.500h4l1.500 2h8.500c.5 0 1 .5 1 1v12z" fill="#fdfdfd" stroke="#333" stroke-width="1.100"/><path d="M1 5.500h16.500" stroke="#333" stroke-width=".9"/><path d="M5.500 8h2.500v3h5v3.500h-7.500z" fill="#3c3" stroke="#222" stroke-width=".7"/><rect x="5.500" y="8" width="2.500" height="2" fill="#e22"/><rect x="5.500" y="12.500" width="7.500" height="2" fill="#24d"/><rect x="5.500" y="10" width="2.500" height="1.300" fill="#fc0"/></svg>
<span class="t" style="top:886.5px;font-size:16px;line-height:22px;color:#111;font-weight:bold;left:47px;">结果</span>
<div style="left:44px;top:910.0px;width:165px;height:23.5px;background:#a9cbe9;border:1px solid #7fb0dc;box-sizing:border-box;"></div>
<svg style="left:46.2px;top:913.7px;" width="17.6" height="17.6" viewBox="0 0 20 20"><defs><linearGradient id="rb" gradientUnits="userSpaceOnUse" x1="3" y1="3" x2="16" y2="18"><stop offset="0" stop-color="#f01818"/><stop offset=".28" stop-color="#ffb400"/><stop offset=".45" stop-color="#f0f020"/><stop offset=".62" stop-color="#30d030"/><stop offset=".8" stop-color="#20c0e0"/><stop offset="1" stop-color="#2040e0"/></linearGradient></defs><path d="M1.500 5.500L8.500 1.500l4.500 1.500v5l4.500 1.500v5.500l-7.500 4.500L1.500 15z" fill="url(#rb)" stroke="#333" stroke-width=".9" stroke-linejoin="round"/><path d="M6.500 6.500L13 4.500M6.500 6.500v5l4 1.500 6.500-3.500M10.500 13v6" fill="none" stroke="#222" stroke-width=".9"/><path d="M6.500 6.500l6.500-2v3.500l4.500 1.500-7 3.500-4-1.500z" fill="#000" fill-opacity=".12"/></svg><span class="t" style="top:908.5px;font-size:9px;line-height:13px;color:#000;left:-137px;width:400px;text-align:center;">σ</span>
<span class="t" style="top:910.5px;font-size:16px;line-height:22px;color:#111;font-weight:bold;letter-spacing:-0.25px;left:70px;">应力1 (-vonMises-)</span>
<svg style="left:46.2px;top:937.7px;" width="17.6" height="17.6" viewBox="0 0 20 20"><defs><linearGradient id="rb" gradientUnits="userSpaceOnUse" x1="3" y1="3" x2="16" y2="18"><stop offset="0" stop-color="#f01818"/><stop offset=".28" stop-color="#ffb400"/><stop offset=".45" stop-color="#f0f020"/><stop offset=".62" stop-color="#30d030"/><stop offset=".8" stop-color="#20c0e0"/><stop offset="1" stop-color="#2040e0"/></linearGradient></defs><path d="M1.500 5.500L8.500 1.500l4.500 1.500v5l4.500 1.500v5.500l-7.500 4.500L1.500 15z" fill="url(#rb)" stroke="#333" stroke-width=".9" stroke-linejoin="round"/><path d="M6.500 6.500L13 4.500M6.500 6.500v5l4 1.500 6.500-3.500M10.500 13v6" fill="none" stroke="#222" stroke-width=".9"/><path d="M6.500 6.500l6.500-2v3.500l4.500 1.500-7 3.500-4-1.500z" fill="#000" fill-opacity=".12"/></svg><span class="t" style="top:932.5px;font-size:9px;line-height:13px;color:#000;left:-137px;width:400px;text-align:center;">u</span>
<span class="t" style="top:934.5px;font-size:16px;line-height:22px;color:#111;left:70px;">位移1 (-合位移-)</span>
<svg style="left:46.2px;top:961.7px;" width="17.6" height="17.6" viewBox="0 0 20 20"><defs><linearGradient id="rb" gradientUnits="userSpaceOnUse" x1="3" y1="3" x2="16" y2="18"><stop offset="0" stop-color="#f01818"/><stop offset=".28" stop-color="#ffb400"/><stop offset=".45" stop-color="#f0f020"/><stop offset=".62" stop-color="#30d030"/><stop offset=".8" stop-color="#20c0e0"/><stop offset="1" stop-color="#2040e0"/></linearGradient></defs><path d="M1.500 5.500L8.500 1.500l4.500 1.500v5l4.500 1.500v5.500l-7.500 4.500L1.500 15z" fill="url(#rb)" stroke="#333" stroke-width=".9" stroke-linejoin="round"/><path d="M6.500 6.500L13 4.500M6.500 6.500v5l4 1.500 6.500-3.500M10.500 13v6" fill="none" stroke="#222" stroke-width=".9"/><path d="M6.500 6.500l6.500-2v3.500l4.500 1.500-7 3.500-4-1.500z" fill="#000" fill-opacity=".12"/></svg><span class="t" style="top:956.5px;font-size:9px;line-height:13px;color:#000;left:-137px;width:400px;text-align:center;">ε</span>
<span class="t" style="top:958.5px;font-size:16px;line-height:22px;color:#111;left:70px;">应变1 (-等量-)</span>
<div style="left:210px;top:429px;width:18px;height:557px;background:#f0f0f0;"></div>
<div style="left:210px;top:526px;width:18px;height:439px;background:#c9c9c9;"></div>
<svg style="left:211px;top:432px;" width="16" height="16" viewBox="-8 -8 16 16"><path d="M-4.5 2.25L0 -2.25L4.5 2.25" fill="none" stroke="#555" stroke-width="1.8"/></svg>
<svg style="left:211px;top:967px;" width="16" height="16" viewBox="-8 -8 16 16"><path d="M-4.5 -2.25L0 2.25L4.5 -2.25" fill="none" stroke="#555" stroke-width="1.8"/></svg>
<div style="left:231px;top:528px;width:11px;height:50px;background:#fff;border:1px solid #b0b0b0;border-left:none;box-sizing:border-box;"></div>
<svg style="left:232px;top:549.5px;" width="7" height="7" viewBox="0 0 7 7"><circle cx="3.500" cy="3.500" r="2.300" fill="#eee" stroke="#aaa" stroke-width=".9"/></svg>
<!-- bottom -->
<div style="left:0px;top:986px;width:231px;height:2px;background:#f4f4f4;"></div>
<div style="left:0px;top:986px;width:231px;height:1px;background:#a8a8a8;"></div>
<div style="left:0px;top:988px;width:1920px;height:21px;background:#f8f8f8;"></div>
<div style="left:0px;top:988px;width:1920px;height:1px;background:#8c8c8c;"></div>
<div style="left:0px;top:988px;width:27px;height:1px;background:#f8f8f8;"></div>
<div style="left:0px;top:1008px;width:1920px;height:1px;background:#8c8c8c;"></div>
<div style="left:1917.5px;top:988px;width:1px;height:21px;background:#8c8c8c;"></div>
<div style="left:0px;top:988px;width:2px;height:20px;background:#a8c8c8;"></div>
<div style="left:27px;top:988px;width:81px;height:20px;background:#a2a2bc;border-top:1.500px solid #555870;box-sizing:border-box;"></div>
<div style="left:28px;top:989.5px;width:18.5px;height:18px;background:#9a9ab4;border:1px solid #8a8aa6;box-sizing:border-box;"></div>
<div style="left:48px;top:989.5px;width:18.5px;height:18px;background:#9a9ab4;border:1px solid #8a8aa6;box-sizing:border-box;"></div>
<div style="left:68px;top:989.5px;width:18.5px;height:18px;background:#9a9ab4;border:1px solid #8a8aa6;box-sizing:border-box;"></div>
<div style="left:88px;top:989.5px;width:18.5px;height:18px;background:#9a9ab4;border:1px solid #8a8aa6;box-sizing:border-box;"></div>
<svg style="left:30px;top:992px;" width="14" height="12" viewBox="0 0 14 12"><path d="M2.500 0v12" stroke="#7e7e9c" stroke-width="1.800"/><path d="M11 0v12L3.500 6z" fill="#7e7e9c"/></svg>
<svg style="left:50px;top:992px;" width="14" height="12" viewBox="0 0 14 12"><path d="M10 0v12L2.500 6z" fill="#7e7e9c"/></svg>
<svg style="left:70px;top:992px;" width="14" height="12" viewBox="0 0 14 12"><path d="M4 0v12l7.500-6z" fill="#7e7e9c"/></svg>
<svg style="left:90px;top:992px;" width="14" height="12" viewBox="0 0 14 12"><path d="M11.500 0v12" stroke="#7e7e9c" stroke-width="1.800"/><path d="M3 0v12l7.500-6z" fill="#7e7e9c"/></svg>
<div style="left:108px;top:989px;width:60.5px;height:19.5px;background:#d2d2d2;border:1px solid #a0a0a0;border-top:none;border-bottom:none;box-sizing:border-box;"></div>
<span class="t" style="top:987.5px;font-size:16px;line-height:22px;color:#222;letter-spacing:0px;left:-60px;width:400px;text-align:center;">模型</span>
<div style="left:168.5px;top:989px;width:77px;height:19.5px;background:#d2d2d2;border:1px solid #a0a0a0;border-top:none;border-bottom:none;box-sizing:border-box;"></div>
<span class="t" style="top:987.5px;font-size:16px;line-height:22px;color:#222;letter-spacing:0px;left:6px;width:400px;text-align:center;">3D 视图</span>
<div style="left:245.5px;top:989px;width:126px;height:19.5px;background:#d2d2d2;border:1px solid #a0a0a0;border-top:none;border-bottom:none;box-sizing:border-box;"></div>
<span class="t" style="top:987.5px;font-size:16px;line-height:22px;color:#222;letter-spacing:-0.2px;left:107.5px;width:400px;text-align:center;">Motion Study 1</span>
<div style="left:371.5px;top:989px;width:168px;height:19.5px;background:#d2d2d2;border:1px solid #a0a0a0;border-top:none;border-bottom:none;box-sizing:border-box;"></div>
<span class="t" style="top:987.5px;font-size:16px;line-height:22px;color:#222;letter-spacing:-0.2px;left:262px;width:400px;text-align:center;">partially completed</span>
<div style="left:539.5px;top:988px;width:57px;height:20.5px;background:#f9f9f9;border-right:1.5px solid #888;box-sizing:border-box;"></div>
<span class="t" style="top:987.5px;font-size:15.5px;line-height:22px;color:#222;left:563px;">M</span>
<svg style="left:380px;top:989px;" width="12" height="12" viewBox="0 0 12 12"><path d="M1 1l4 6M3 1v4M9 1v7" stroke="#333" stroke-width="1.200"/><path d="M6.500 6h5L9 10z" fill="#2a7ab0"/><path d="M6 11l3-6 3 6z" fill="#fc3"/></svg>
<svg style="left:550px;top:989px;" width="12" height="12" viewBox="0 0 12 12"><path d="M1 1l4 6M3 1v4M9 1v7" stroke="#333" stroke-width="1.200"/><path d="M6.500 6h5L9 10z" fill="#2a7ab0"/></svg>
<div style="left:0px;top:1009px;width:1920px;height:21px;background:#f8f8f8;"></div>
<span class="t" style="top:1010.5px;font-size:15.5px;line-height:22px;color:#111;letter-spacing:-0.15px;left:1px;">SOLIDWORKS Premium 2020 SP2.0</span>
<span class="t" style="top:1011.0px;font-size:15px;line-height:21px;color:#111;letter-spacing:-0.3px;left:1505.5px;">欠定义</span>
<span class="t" style="top:1011.0px;font-size:15px;line-height:21px;color:#111;letter-spacing:-0.3px;left:1568px;">在编辑 装配体</span>
<svg style="left:1686.75px;top:1013.25px;" width="7.5" height="13.5" viewBox="0 0 10 18"><rect x=".5" y=".5" width="9" height="17" rx="4.500" fill="#222"/><circle cx="5" cy="5" r="2.600" fill="#e22"/><circle cx="5" cy="13" r="2.600" fill="#2a2"/><circle cx="4.300" cy="4.300" r=".9" fill="#fbb"/><circle cx="4.300" cy="12.300" r=".9" fill="#bfb"/></svg>
<div style="left:1700px;top:1010px;width:1px;height:20px;background:#d8d8d8;"></div>
<span class="t" style="top:1011.0px;font-size:15px;line-height:21px;color:#111;letter-spacing:-0.3px;left:1801.5px;">自定义</span>
<svg style="left:1868px;top:1018px;" width="7" height="5" viewBox="0 0 7 5"><path d="M0 4.500h6.500L3.250 0z" fill="#333"/></svg>
<svg style="left:1899px;top:1011px;" width="20" height="18" viewBox="0 0 20 18"><path d="M2 8l9-6 8 5-9 7z" fill="#fff" stroke="#444" stroke-width="1.100"/><path d="M2 8v3l8 6 9-7V7" fill="none" stroke="#444" stroke-width="1.100"/><circle cx="8" cy="8" r="2" fill="none" stroke="#444" stroke-width=".9"/><path d="M11 6l4 3" stroke="#444" stroke-width=".9"/></svg>
<div style="left:0px;top:1030px;width:1920px;height:40px;background:#07080d;"></div>
<div style="left:186px;top:1030px;width:61px;height:40px;background:#2a2b30;"></div>
<svg style="left:20px;top:1044px;" width="20" height="20" viewBox="0 0 20 20"><path d="M0 3l8.500-1.300v8H0zM9.500 1.500L20 0v9.700H9.500zM0 10.700h8.500v8L0 17.500zM9.500 10.700H20V20l-10.500-1.500z" fill="#fff"/></svg>
<svg style="left:80px;top:1044px;" width="22" height="22" viewBox="0 0 22 22"><circle cx="13" cy="8" r="6.500" fill="none" stroke="#fff" stroke-width="1.600"/><path d="M8.500 13L1 21" stroke="#fff" stroke-width="1.800"/></svg>
<svg style="left:138px;top:1039px;" width="32" height="31" viewBox="0 0 32 31"><defs><linearGradient id="qq" x1="0" y1="0" x2="1" y2="1"><stop offset="0" stop-color="#5ad0ff"/><stop offset="1" stop-color="#1a7ae8"/></linearGradient></defs><circle cx="16" cy="16" r="11" fill="none" stroke="url(#qq)" stroke-width="7.500"/><path d="M14 28c0-2.500 2-4 4-3.500 1-3 6-3 7 0 3-.5 5 1.500 4.500 4v3H14z" fill="#fff"/></svg>
<svg style="left:201px;top:1040px;" width="30" height="30" viewBox="0 0 30 30"><path d="M2 7l13-5.500L28 7v15L15 29 2 22z" fill="#c8201c"/><path d="M2 7l13 6 13-6M15 13v16" stroke="#8a100c" stroke-width="1" fill="none"/><path d="M2 7l13-5.500L28 7 15 13z" fill="#e23a34"/></svg>
<span class="t" style="top:1043.0px;font-size:17px;line-height:24px;color:#fff;font-weight:bold;letter-spacing:1px;left:16px;width:400px;text-align:center;">SW</span>
<span class="t" style="top:1060.0px;font-size:7px;line-height:10px;color:#fff;font-weight:bold;left:21px;width:400px;text-align:center;">2020</span>
<div style="left:264.5px;top:1041px;width:27px;height:27px;background:linear-gradient(180deg,#3a9af4,#1f78e0);border-radius:4px;"></div>
<svg style="left:268px;top:1048px;" width="20" height="14" viewBox="0 0 20 14"><path d="M1 1.500l4 10 5-8 5 8 4-10" fill="none" stroke="#fff" stroke-width="2.600" stroke-linejoin="miter"/></svg>
<svg style="left:1665px;top:1049px;" width="16" height="16" viewBox="-8 -8 16 16"><path d="M-7 3.5L0 -3.5L7 3.5" fill="none" stroke="#fff" stroke-width="1.5"/></svg>
<span class="t" style="top:1042.5px;font-size:18px;line-height:25px;color:#fff;left:1502px;width:400px;text-align:center;">中</span>
<svg style="left:1727px;top:1044px;" width="22" height="22" viewBox="0 0 22 22"><rect x="2" y="3" width="17" height="16" rx="4" fill="#f4581c" transform="rotate(-14 11 11)"/></svg><span class="t" style="top:1044.5px;font-size:15px;line-height:21px;color:#fff;font-weight:bold;left:1538px;width:400px;text-align:center;font-style:italic;transform:scaleX(1.300) rotate(-10deg);">S</span>
<span class="t" style="top:1032.0px;font-size:15px;line-height:21px;color:#fff;left:1607px;width:400px;text-align:center;">21:52</span>
<span class="t" style="top:1055.5px;font-size:15px;line-height:21px;color:#fff;left:1607px;width:400px;text-align:center;">2021/3/12</span>
<svg style="left:1868px;top:1044px;" width="26" height="26" viewBox="0 0 26 26"><path d="M1 1h20v15h-8l-5 5v-5H1z" fill="#fff"/><path d="M4.500 5h13M4.500 8.500h13M4.500 12h9" stroke="#07080d" stroke-width="1.300"/><circle cx="18.500" cy="19" r="7.500" fill="#3a3a3e"/></svg>
<span class="t" style="top:1054.0px;font-size:13px;line-height:18px;color:#fff;font-weight:bold;left:1686.5px;width:400px;text-align:center;">2</span>
<div style="left:1914px;top:1030px;width:1px;height:40px;background:#555;"></div>
</div></body></html>
